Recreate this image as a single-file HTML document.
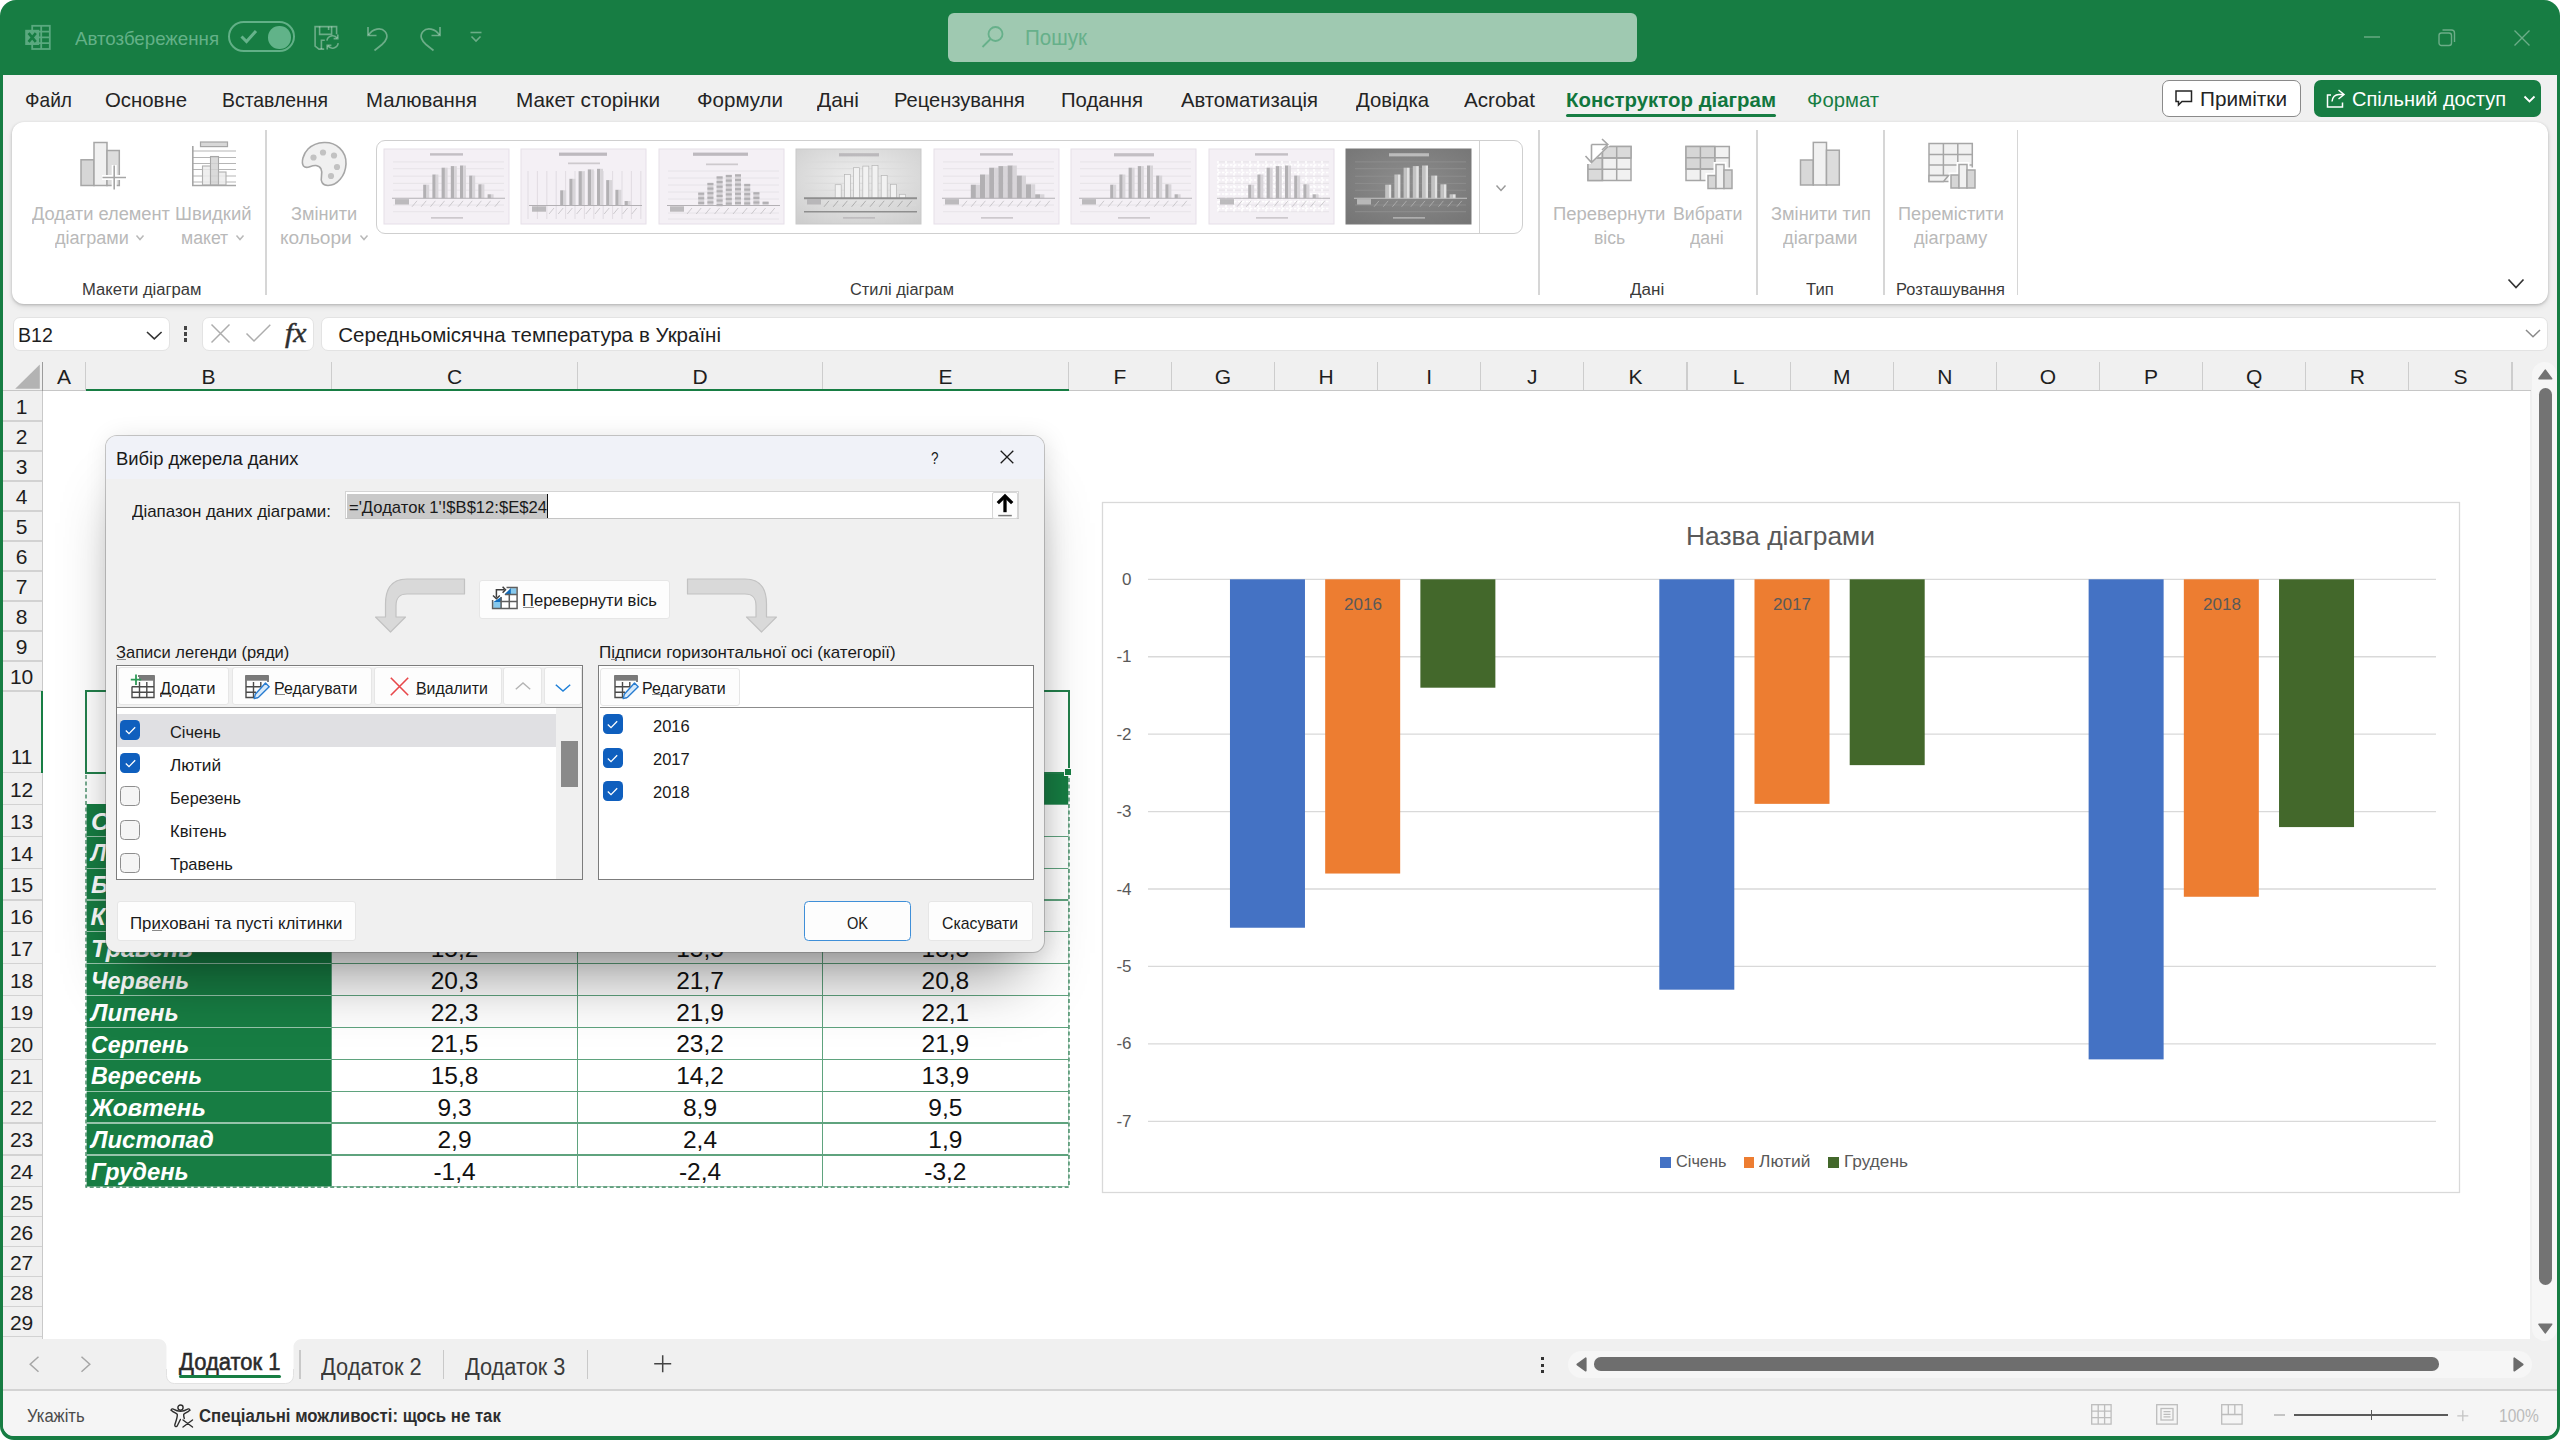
<!DOCTYPE html>
<html lang="uk"><head><meta charset="utf-8"><title>Excel</title>
<style>
html,body{margin:0;padding:0;background:#fff;}
body{width:2560px;height:1440px;overflow:hidden;position:relative;font-family:"Liberation Sans",sans-serif;}
div,span.t,svg{position:absolute;box-sizing:border-box;}
span.t{white-space:nowrap;display:block;}
svg{overflow:visible;}
svg text{font-family:"Liberation Sans",sans-serif;}
</style></head><body>
<div style="left:0px;top:0px;width:2560px;height:1440px;background:#177D43;border-radius:16px 16px 14px 14px;"></div>
<div style="left:3px;top:75px;width:2554px;height:1361px;background:#F0F0F0;border-radius:0 0 11px 11px;"></div>
<svg style="left:24px;top:24px;" width="27" height="27" viewBox="0 0 27 27"><g fill="none" stroke="#5AA97F" stroke-width="1.8">
      <rect x="8.2" y="1.8" width="17.6" height="23.2"/><path d="M8.2 7.6H25.8M8.2 13.4H25.8M8.2 19.2H25.8M17.2 1.8V25"/></g>
      <rect x="1.2" y="5.8" width="14" height="15.2" fill="#5AA97F"/>
      <path d="M4.6 9.2L11.8 17.8M11.8 9.2L4.6 17.8" stroke="#177D43" stroke-width="2.7"/></svg>
<span class="t" style="left:75.00px;top:30.14px;font-size:18.5px;line-height:18.5px;color:#64B188;transform:scaleX(1.0102);transform-origin:0 50%;">Автозбереження</span>
<div style="left:228px;top:21px;width:67px;height:31px;border:2px solid #62B087;border-radius:16px;"></div>
<svg style="left:240px;top:29px;" width="18" height="15" viewBox="0 0 18 15"><path d="M1.5 7.5L6.5 12.5L16 2" fill="none" stroke="#66B38B" stroke-width="3"/></svg>
<div style="left:268px;top:26px;width:22.5px;height:22.5px;background:#61B389;border-radius:50%;"></div>
<svg style="left:314px;top:25px;" width="28" height="27" viewBox="0 0 28 27"><g fill="none" stroke="rgba(255,255,255,0.37)" stroke-width="1.6">
      <path d="M22.6 9.2V1.6H1.1V21.1L5 24.1H10.2"/><path d="M5.6 1.6V9.4H17.6V1.6"/><path d="M14.6 1.8V5M7.4 24V15.2H10.8"/>
      <path d="M12.9 15.6a5.8 5.8 0 0 1 10.4-2.4M24.2 18.2a5.8 5.8 0 0 1-10.4 2.6"/><path d="M23.8 9.4V13.6H19.6M13.2 24.6V20.4H17.4"/></g></svg>
<svg style="left:365px;top:25px;" width="26" height="26" viewBox="0 0 26 26"><g fill="none" stroke="rgba(255,255,255,0.37)" stroke-width="1.7"><path d="M3 2V10.5H11.5"/><path d="M3.5 10C8 3.5 16 2 20 6.5C24 11 21 16 17 19.5L9.5 25.5"/></g></svg>
<svg style="left:417px;top:25px;" width="26" height="26" viewBox="0 0 26 26"><g fill="none" stroke="rgba(255,255,255,0.37)" stroke-width="1.7"><path d="M23 2V10.5H14.5"/><path d="M22.5 10C18 3.5 10 2 6 6.5C2 11 5 16 9 19.5L16.5 25.5"/></g></svg>
<svg style="left:469px;top:31px;" width="14" height="12" viewBox="0 0 14 12"><g fill="none" stroke="rgba(255,255,255,0.37)" stroke-width="1.6"><path d="M1.5 1.5H12.5"/><path d="M2.5 5.5L7 10L11.5 5.5"/></g></svg>
<div style="left:948px;top:13px;width:689px;height:49px;background:#9FC9B1;border-radius:6px;"></div>
<svg style="left:981px;top:25px;" width="24" height="24" viewBox="0 0 24 24"><g fill="none" stroke="#66B08A" stroke-width="1.8"><circle cx="14.5" cy="9" r="7"/><path d="M9.5 14L1.5 22"/></g></svg>
<span class="t" style="left:1025.00px;top:27.18px;font-size:22px;line-height:22px;color:#66B08A;transform:scaleX(0.9348);transform-origin:0 50%;">Пошук</span>
<svg style="left:2364px;top:36px;" width="17" height="2" viewBox="0 0 17 2"><path d="M0 1H16" stroke="rgba(255,255,255,0.37)" stroke-width="1.4"/></svg>
<svg style="left:2438px;top:29px;" width="18" height="18" viewBox="0 0 18 18"><g fill="none" stroke="rgba(255,255,255,0.37)" stroke-width="1.4"><rect x="1" y="4" width="12.5" height="12.5" rx="2.5"/><path d="M4.5 1H13.5a3 3 0 0 1 3 3V13"/></g></svg>
<svg style="left:2513px;top:29px;" width="18" height="18" viewBox="0 0 18 18"><path d="M1.5 1.5L16.5 16.5M16.5 1.5L1.5 16.5" stroke="rgba(255,255,255,0.37)" stroke-width="1.4"/></svg>
<span class="t" style="left:25.00px;top:88.92px;font-size:21px;line-height:21px;color:#242424;transform:scaleX(0.9103);transform-origin:0 50%;">Файл</span>
<span class="t" style="left:105.00px;top:88.92px;font-size:21px;line-height:21px;color:#242424;transform:scaleX(0.9699);transform-origin:0 50%;">Основне</span>
<span class="t" style="left:222.00px;top:88.92px;font-size:21px;line-height:21px;color:#242424;transform:scaleX(0.9238);transform-origin:0 50%;">Вставлення</span>
<span class="t" style="left:366.00px;top:88.92px;font-size:21px;line-height:21px;color:#242424;transform:scaleX(0.9688);transform-origin:0 50%;">Малювання</span>
<span class="t" style="left:516.00px;top:88.92px;font-size:21px;line-height:21px;color:#242424;transform:scaleX(0.9884);transform-origin:0 50%;">Макет сторінки</span>
<span class="t" style="left:697.00px;top:88.92px;font-size:21px;line-height:21px;color:#242424;transform:scaleX(0.9770);transform-origin:0 50%;">Формули</span>
<span class="t" style="left:817.00px;top:88.92px;font-size:21px;line-height:21px;color:#242424;transform:scaleX(0.9961);transform-origin:0 50%;">Дані</span>
<span class="t" style="left:894.00px;top:88.92px;font-size:21px;line-height:21px;color:#242424;transform:scaleX(0.9570);transform-origin:0 50%;">Рецензування</span>
<span class="t" style="left:1061.00px;top:88.92px;font-size:21px;line-height:21px;color:#242424;transform:scaleX(0.9668);transform-origin:0 50%;">Подання</span>
<span class="t" style="left:1181.00px;top:88.92px;font-size:21px;line-height:21px;color:#242424;transform:scaleX(0.9638);transform-origin:0 50%;">Автоматизація</span>
<span class="t" style="left:1356.00px;top:88.92px;font-size:21px;line-height:21px;color:#242424;transform:scaleX(0.9663);transform-origin:0 50%;">Довідка</span>
<span class="t" style="left:1464.00px;top:88.92px;font-size:21px;line-height:21px;color:#242424;transform:scaleX(0.9810);transform-origin:0 50%;">Acrobat</span>
<span class="t" style="left:1566.00px;top:88.92px;font-size:21px;line-height:21px;color:#11763D;transform:scaleX(0.9715);transform-origin:0 50%;font-weight:700;">Конструктор діаграм</span>
<div style="left:1566px;top:114px;width:210px;height:3px;background:#177D43;border-radius:1.5px;"></div>
<span class="t" style="left:1807.00px;top:88.92px;font-size:21px;line-height:21px;color:#177D43;transform:scaleX(0.9652);transform-origin:0 50%;">Формат</span>
<div style="left:2162px;top:80px;width:139px;height:37px;background:#fff;border:1px solid #8A8A8A;border-radius:7px;"></div>
<svg style="left:2175px;top:90px;" width="18" height="17" viewBox="0 0 18 17"><path d="M1 1H16.5V11.5H7L3.5 15V11.5H1Z" fill="none" stroke="#242424" stroke-width="1.5"/></svg>
<span class="t" style="left:2200.00px;top:88.22px;font-size:21px;line-height:21px;color:#242424;transform:scaleX(0.9870);transform-origin:0 50%;">Примітки</span>
<div style="left:2314px;top:80px;width:227px;height:37px;background:#177D43;border-radius:7px;"></div>
<svg style="left:2326px;top:89px;" width="20" height="19" viewBox="0 0 20 19"><g fill="none" stroke="#fff" stroke-width="1.5"><path d="M5 6H1.5V18H16.5V13.5"/><path d="M12.5 1L18 5.5L12.5 10M18 5.5H13C9 5.5 6.5 8.5 6 12.5"/></g></svg>
<span class="t" style="left:2352.00px;top:88.22px;font-size:21px;line-height:21px;color:#fff;transform:scaleX(0.9538);transform-origin:0 50%;">Спільний доступ</span>
<svg style="left:2523px;top:95px;" width="13" height="9" viewBox="0 0 13 9"><path d="M1.5 1.5L6.5 6.5L11.5 1.5" fill="none" stroke="#fff" stroke-width="1.8"/></svg>
<div style="left:12px;top:122px;width:2536px;height:182px;background:#fff;border-radius:12px;box-shadow:0 1px 3px rgba(0,0,0,0.22),0 3px 6px rgba(0,0,0,0.08);"></div>
<div style="left:265px;top:130px;width:1.5px;height:165px;background:#D6D6D6;"></div>
<div style="left:1538px;top:130px;width:1.5px;height:165px;background:#D6D6D6;"></div>
<div style="left:1756px;top:130px;width:1.5px;height:165px;background:#D6D6D6;"></div>
<div style="left:1883px;top:130px;width:1.5px;height:165px;background:#D6D6D6;"></div>
<div style="left:2016.5px;top:130px;width:1.5px;height:165px;background:#D6D6D6;"></div>
<svg style="left:78px;top:139px;" width="52" height="54" viewBox="0 0 52 54"><g stroke="#A6A6A6" stroke-width="1.5">
      <rect x="3" y="20.8" width="13" height="25.7" fill="#D6D6D6"/>
      <rect x="16" y="3.5" width="13" height="43" fill="#F0F0F0"/>
      <rect x="29" y="11.5" width="12.3" height="35" fill="#DDDDDD"/></g>
      <path d="M24 38.5H48M36.2 26V50.5" stroke="#fff" stroke-width="5"/>
      <path d="M24.5 38.5H48M36.2 26.5V50.5" stroke="#A6A6A6" stroke-width="1.6"/></svg>
<span class="t" style="left:32.00px;top:204.56px;font-size:18px;line-height:18px;color:#B9B9B9;transform:scaleX(1.0152);transform-origin:0 50%;">Додати елемент</span>
<span class="t" style="left:54.50px;top:229.26px;font-size:18px;line-height:18px;color:#B9B9B9;transform:scaleX(1.0036);transform-origin:0 50%;">діаграми</span>
<svg style="left:136px;top:234.5px;" width="8" height="5" viewBox="0 0 8 5"><path d="M0.5 0.5L4.0 4.5L7.5 0.5" fill="none" stroke="#B9B9B9" stroke-width="1.5"/></svg>
<svg style="left:191px;top:139px;" width="48" height="50" viewBox="0 0 48 50"><rect x="9.5" y="3" width="27" height="4.6" fill="#D8D8D8" stroke="#A6A6A6" stroke-width="1.2"/>
      <path d="M1.5 12H45" stroke="#B5B5B5" stroke-width="1.1"/><path d="M1.5 18.5H45" stroke="#B5B5B5" stroke-width="1.1"/><path d="M1.5 24.5H45" stroke="#B5B5B5" stroke-width="1.1"/><path d="M1.5 30.5H45" stroke="#B5B5B5" stroke-width="1.1"/><path d="M1.5 37H45" stroke="#B5B5B5" stroke-width="1.1"/><path d="M1.5 43H45" stroke="#B5B5B5" stroke-width="1.1"/>
      <rect x="11.5" y="27" width="8" height="19" fill="#ECECEC" stroke="#B0B0B0" stroke-width="1.1" fill-opacity="0.85"/>
      <rect x="19.5" y="17.5" width="8" height="28.5" fill="#D4D4D4" stroke="#A8A8A8" stroke-width="1.1" fill-opacity="0.85"/>
      <rect x="27.5" y="33" width="7.5" height="13" fill="#ECECEC" stroke="#B0B0B0" stroke-width="1.1" fill-opacity="0.85"/>
      <path d="M1.8 7V46.5H45" fill="none" stroke="#A6A6A6" stroke-width="1.6"/></svg>
<span class="t" style="left:175.40px;top:204.56px;font-size:18px;line-height:18px;color:#B9B9B9;transform:scaleX(1.0268);transform-origin:0 50%;">Швидкий</span>
<span class="t" style="left:181.00px;top:229.26px;font-size:18px;line-height:18px;color:#B9B9B9;transform:scaleX(0.9808);transform-origin:0 50%;">макет</span>
<svg style="left:235.8px;top:234.5px;" width="8" height="5" viewBox="0 0 8 5"><path d="M0.5 0.5L4.0 4.5L7.5 0.5" fill="none" stroke="#B9B9B9" stroke-width="1.5"/></svg>
<svg style="left:300px;top:139px;" width="50" height="50" viewBox="0 0 50 50"><path d="M24 3.5C36 3 46.5 12 46 25C45.5 37 37 46.5 28 46.5C22 46.5 20.5 42 21.5 37C22.5 31.5 21 27 16 26.5C10 26 7 31 3.5 27C1 23.5 3 15 8 10C12 6 17.5 3.8 24 3.5Z" fill="#F0F0F0" stroke="#A6A6A6" stroke-width="1.6"/>
      <g fill="#C2C2C2"><circle cx="13.5" cy="18.5" r="3.1"/><circle cx="23" cy="13.5" r="3.1"/><circle cx="34" cy="16.5" r="3.1"/><circle cx="37" cy="28" r="3.1"/><circle cx="31" cy="37" r="3.1"/></g></svg>
<span class="t" style="left:291.40px;top:204.56px;font-size:18px;line-height:18px;color:#B9B9B9;transform:scaleX(1.0100);transform-origin:0 50%;">Змінити</span>
<span class="t" style="left:280.20px;top:229.26px;font-size:18px;line-height:18px;color:#B9B9B9;transform:scaleX(1.0612);transform-origin:0 50%;">кольори</span>
<svg style="left:359.6px;top:234.5px;" width="8" height="5" viewBox="0 0 8 5"><path d="M0.5 0.5L4.0 4.5L7.5 0.5" fill="none" stroke="#B9B9B9" stroke-width="1.5"/></svg>
<div style="left:375.5px;top:140px;width:1147px;height:94px;background:#fff;border:1.3px solid #CFCFCF;border-radius:9px;"></div>
<div style="left:1479px;top:141px;width:1.3px;height:92px;background:#D2D2D2;"></div>
<svg style="left:384px;top:149px;" width="125" height="75" viewBox="0 0 125 75"><rect x="0" y="0" width="125" height="75" fill="#F4F0F5" stroke="#E6DFE8" stroke-width="1"/><path d="M9 12.9H120" stroke="#E3DFE4" stroke-width="0.8"/><path d="M9 19.7H120" stroke="#E3DFE4" stroke-width="0.8"/><path d="M9 27.2H120" stroke="#E3DFE4" stroke-width="0.8"/><path d="M9 34.4H120" stroke="#E3DFE4" stroke-width="0.8"/><path d="M9 41.2H120" stroke="#E3DFE4" stroke-width="0.8"/><path d="M9 56H120" stroke="#E3DFE4" stroke-width="0.8"/><path d="M9 62.7H120" stroke="#E3DFE4" stroke-width="0.8"/><rect x="46" y="4.2" width="33" height="2.4" fill="#A5A1A6" opacity="0.62"/><rect x="47" y="68" width="32" height="1.7" fill="#A5A1A6" opacity="0.5"/><rect x="39.2" y="35.7" width="3.3" height="13.6" fill="#B2B0B3"/><rect x="42.5" y="35.7" width="2.7" height="13.6" fill="#D8D5D9"/><rect x="48.4" y="25.5" width="3.3" height="23.8" fill="#B2B0B3"/><rect x="51.7" y="25.5" width="2.7" height="23.8" fill="#D8D5D9"/><rect x="57.6" y="18.7" width="3.3" height="30.6" fill="#B2B0B3"/><rect x="60.9" y="18.7" width="2.7" height="30.6" fill="#D8D5D9"/><rect x="66.8" y="17.1" width="3.3" height="32.2" fill="#B2B0B3"/><rect x="70.1" y="17.1" width="2.7" height="32.2" fill="#D8D5D9"/><rect x="76.0" y="16.5" width="3.3" height="32.8" fill="#B2B0B3"/><rect x="79.3" y="16.5" width="2.7" height="32.8" fill="#D8D5D9"/><rect x="85.2" y="26.6" width="3.3" height="22.7" fill="#B2B0B3"/><rect x="88.5" y="26.6" width="2.7" height="22.7" fill="#D8D5D9"/><rect x="94.4" y="35.3" width="3.3" height="14.0" fill="#B2B0B3"/><rect x="97.7" y="35.3" width="2.7" height="14.0" fill="#D8D5D9"/><rect x="103.6" y="45.3" width="3.3" height="4.0" fill="#B2B0B3"/><rect x="106.9" y="45.3" width="2.7" height="4.0" fill="#D8D5D9"/><path d="M8 49.3H121" stroke="#B3B0B4" stroke-width="1.1"/><rect x="11" y="50.099999999999994" width="14" height="5.4" fill="#B2B0B3" opacity="0.85"/><path d="M28.0 57.8L33.0 51.8" stroke="#B3B0B4" stroke-width="0.8" opacity="0.75"/><path d="M37.2 57.8L42.2 51.8" stroke="#B3B0B4" stroke-width="0.8" opacity="0.75"/><path d="M46.4 57.8L51.4 51.8" stroke="#B3B0B4" stroke-width="0.8" opacity="0.75"/><path d="M55.6 57.8L60.6 51.8" stroke="#B3B0B4" stroke-width="0.8" opacity="0.75"/><path d="M64.8 57.8L69.8 51.8" stroke="#B3B0B4" stroke-width="0.8" opacity="0.75"/><path d="M74.0 57.8L79.0 51.8" stroke="#B3B0B4" stroke-width="0.8" opacity="0.75"/><path d="M83.2 57.8L88.2 51.8" stroke="#B3B0B4" stroke-width="0.8" opacity="0.75"/><path d="M92.4 57.8L97.4 51.8" stroke="#B3B0B4" stroke-width="0.8" opacity="0.75"/><path d="M101.6 57.8L106.6 51.8" stroke="#B3B0B4" stroke-width="0.8" opacity="0.75"/><path d="M110.8 57.8L115.8 51.8" stroke="#B3B0B4" stroke-width="0.8" opacity="0.75"/></svg>
<svg style="left:521.4px;top:149px;" width="125" height="75" viewBox="0 0 125 75"><rect x="0" y="0" width="125" height="75" fill="#F4F0F5" stroke="#E6DFE8" stroke-width="1"/><path d="M7.0 22V70" stroke="#DCD7DD" stroke-width="0.8"/><path d="M16.4 22V70" stroke="#DCD7DD" stroke-width="0.8"/><path d="M25.8 22V70" stroke="#DCD7DD" stroke-width="0.8"/><path d="M35.2 22V70" stroke="#DCD7DD" stroke-width="0.8"/><path d="M44.6 22V70" stroke="#DCD7DD" stroke-width="0.8"/><path d="M54.0 22V70" stroke="#DCD7DD" stroke-width="0.8"/><path d="M63.4 22V70" stroke="#DCD7DD" stroke-width="0.8"/><path d="M72.8 22V70" stroke="#DCD7DD" stroke-width="0.8"/><path d="M82.2 22V70" stroke="#DCD7DD" stroke-width="0.8"/><path d="M91.6 22V70" stroke="#DCD7DD" stroke-width="0.8"/><path d="M101.0 22V70" stroke="#DCD7DD" stroke-width="0.8"/><path d="M110.4 22V70" stroke="#DCD7DD" stroke-width="0.8"/><path d="M119.8 22V70" stroke="#DCD7DD" stroke-width="0.8"/><rect x="38" y="3.6" width="48" height="3.2" fill="#A5A1A6" opacity="0.7"/><rect x="47" y="13.5" width="32" height="1.7" fill="#A5A1A6" opacity="0.5"/><rect x="39.2" y="41.3" width="3.3" height="15.2" fill="#B2B0B3"/><rect x="42.5" y="41.3" width="2.7" height="15.2" fill="#D8D5D9"/><rect x="48.4" y="29.8" width="3.3" height="26.7" fill="#B2B0B3"/><rect x="51.7" y="29.8" width="2.7" height="26.7" fill="#D8D5D9"/><rect x="57.6" y="22.2" width="3.3" height="34.3" fill="#B2B0B3"/><rect x="60.9" y="22.2" width="2.7" height="34.3" fill="#D8D5D9"/><rect x="66.8" y="20.4" width="3.3" height="36.1" fill="#B2B0B3"/><rect x="70.1" y="20.4" width="2.7" height="36.1" fill="#D8D5D9"/><rect x="76.0" y="19.8" width="3.3" height="36.7" fill="#B2B0B3"/><rect x="79.3" y="19.8" width="2.7" height="36.7" fill="#D8D5D9"/><rect x="85.2" y="31.1" width="3.3" height="25.4" fill="#B2B0B3"/><rect x="88.5" y="31.1" width="2.7" height="25.4" fill="#D8D5D9"/><rect x="94.4" y="40.8" width="3.3" height="15.7" fill="#B2B0B3"/><rect x="97.7" y="40.8" width="2.7" height="15.7" fill="#D8D5D9"/><rect x="103.6" y="52.0" width="3.3" height="4.5" fill="#B2B0B3"/><rect x="106.9" y="52.0" width="2.7" height="4.5" fill="#D8D5D9"/><path d="M8 56.5H121" stroke="#B3B0B4" stroke-width="1.1"/><rect x="11" y="57.3" width="14" height="5.4" fill="#B2B0B3" opacity="0.85"/><path d="M28.0 65.0L33.0 59.0" stroke="#B3B0B4" stroke-width="0.8" opacity="0.75"/><path d="M37.2 65.0L42.2 59.0" stroke="#B3B0B4" stroke-width="0.8" opacity="0.75"/><path d="M46.4 65.0L51.4 59.0" stroke="#B3B0B4" stroke-width="0.8" opacity="0.75"/><path d="M55.6 65.0L60.6 59.0" stroke="#B3B0B4" stroke-width="0.8" opacity="0.75"/><path d="M64.8 65.0L69.8 59.0" stroke="#B3B0B4" stroke-width="0.8" opacity="0.75"/><path d="M74.0 65.0L79.0 59.0" stroke="#B3B0B4" stroke-width="0.8" opacity="0.75"/><path d="M83.2 65.0L88.2 59.0" stroke="#B3B0B4" stroke-width="0.8" opacity="0.75"/><path d="M92.4 65.0L97.4 59.0" stroke="#B3B0B4" stroke-width="0.8" opacity="0.75"/><path d="M101.6 65.0L106.6 59.0" stroke="#B3B0B4" stroke-width="0.8" opacity="0.75"/><path d="M110.8 65.0L115.8 59.0" stroke="#B3B0B4" stroke-width="0.8" opacity="0.75"/></svg>
<svg style="left:658.9px;top:149px;" width="125" height="75" viewBox="0 0 125 75"><rect x="0" y="0" width="125" height="75" fill="#F4F0F5" stroke="#E6DFE8" stroke-width="1"/><path d="M9 22H120" stroke="#E3DFE4" stroke-width="0.8"/><path d="M9 29H120" stroke="#E3DFE4" stroke-width="0.8"/><path d="M9 36H120" stroke="#E3DFE4" stroke-width="0.8"/><path d="M9 43H120" stroke="#E3DFE4" stroke-width="0.8"/><path d="M9 50H120" stroke="#E3DFE4" stroke-width="0.8"/><path d="M9 64H120" stroke="#E3DFE4" stroke-width="0.8"/><path d="M9 70H120" stroke="#E3DFE4" stroke-width="0.8"/><rect x="34" y="3.6" width="55" height="3.2" fill="#A5A1A6" opacity="0.7"/><rect x="47" y="14.5" width="32" height="1.7" fill="#A5A1A6" opacity="0.5"/><rect x="39.2" y="43.6" width="6.0" height="12.9" fill="#D8D5D9"/><rect x="39.2" y="43.6" width="6.0" height="2.2" fill="#B2B0B3"/><rect x="39.2" y="48.2" width="6.0" height="2.2" fill="#B2B0B3"/><rect x="39.2" y="52.8" width="6.0" height="2.2" fill="#B2B0B3"/><rect x="48.4" y="33.9" width="6.0" height="22.6" fill="#D8D5D9"/><rect x="48.4" y="33.9" width="6.0" height="2.2" fill="#B2B0B3"/><rect x="48.4" y="38.5" width="6.0" height="2.2" fill="#B2B0B3"/><rect x="48.4" y="43.1" width="6.0" height="2.2" fill="#B2B0B3"/><rect x="48.4" y="47.7" width="6.0" height="2.2" fill="#B2B0B3"/><rect x="48.4" y="52.3" width="6.0" height="2.2" fill="#B2B0B3"/><rect x="57.6" y="27.4" width="6.0" height="29.1" fill="#D8D5D9"/><rect x="57.6" y="27.4" width="6.0" height="2.2" fill="#B2B0B3"/><rect x="57.6" y="32.0" width="6.0" height="2.2" fill="#B2B0B3"/><rect x="57.6" y="36.6" width="6.0" height="2.2" fill="#B2B0B3"/><rect x="57.6" y="41.2" width="6.0" height="2.2" fill="#B2B0B3"/><rect x="57.6" y="45.8" width="6.0" height="2.2" fill="#B2B0B3"/><rect x="57.6" y="50.4" width="6.0" height="2.2" fill="#B2B0B3"/><rect x="57.6" y="55.0" width="6.0" height="2.2" fill="#B2B0B3"/><rect x="66.8" y="25.9" width="6.0" height="30.6" fill="#D8D5D9"/><rect x="66.8" y="25.9" width="6.0" height="2.2" fill="#B2B0B3"/><rect x="66.8" y="30.5" width="6.0" height="2.2" fill="#B2B0B3"/><rect x="66.8" y="35.1" width="6.0" height="2.2" fill="#B2B0B3"/><rect x="66.8" y="39.7" width="6.0" height="2.2" fill="#B2B0B3"/><rect x="66.8" y="44.3" width="6.0" height="2.2" fill="#B2B0B3"/><rect x="66.8" y="48.9" width="6.0" height="2.2" fill="#B2B0B3"/><rect x="66.8" y="53.5" width="6.0" height="2.2" fill="#B2B0B3"/><rect x="76.0" y="25.3" width="6.0" height="31.2" fill="#D8D5D9"/><rect x="76.0" y="25.3" width="6.0" height="2.2" fill="#B2B0B3"/><rect x="76.0" y="29.9" width="6.0" height="2.2" fill="#B2B0B3"/><rect x="76.0" y="34.5" width="6.0" height="2.2" fill="#B2B0B3"/><rect x="76.0" y="39.1" width="6.0" height="2.2" fill="#B2B0B3"/><rect x="76.0" y="43.7" width="6.0" height="2.2" fill="#B2B0B3"/><rect x="76.0" y="48.3" width="6.0" height="2.2" fill="#B2B0B3"/><rect x="76.0" y="52.9" width="6.0" height="2.2" fill="#B2B0B3"/><rect x="85.2" y="34.9" width="6.0" height="21.6" fill="#D8D5D9"/><rect x="85.2" y="34.9" width="6.0" height="2.2" fill="#B2B0B3"/><rect x="85.2" y="39.5" width="6.0" height="2.2" fill="#B2B0B3"/><rect x="85.2" y="44.1" width="6.0" height="2.2" fill="#B2B0B3"/><rect x="85.2" y="48.7" width="6.0" height="2.2" fill="#B2B0B3"/><rect x="85.2" y="53.3" width="6.0" height="2.2" fill="#B2B0B3"/><rect x="94.4" y="43.2" width="6.0" height="13.3" fill="#D8D5D9"/><rect x="94.4" y="43.2" width="6.0" height="2.2" fill="#B2B0B3"/><rect x="94.4" y="47.8" width="6.0" height="2.2" fill="#B2B0B3"/><rect x="94.4" y="52.4" width="6.0" height="2.2" fill="#B2B0B3"/><rect x="103.6" y="52.7" width="6.0" height="3.8" fill="#D8D5D9"/><rect x="103.6" y="52.7" width="6.0" height="2.2" fill="#B2B0B3"/><path d="M8 56.5H121" stroke="#B3B0B4" stroke-width="1.1"/><rect x="11" y="57.3" width="14" height="5.4" fill="#B2B0B3" opacity="0.85"/><path d="M28.0 65.0L33.0 59.0" stroke="#B3B0B4" stroke-width="0.8" opacity="0.75"/><path d="M37.2 65.0L42.2 59.0" stroke="#B3B0B4" stroke-width="0.8" opacity="0.75"/><path d="M46.4 65.0L51.4 59.0" stroke="#B3B0B4" stroke-width="0.8" opacity="0.75"/><path d="M55.6 65.0L60.6 59.0" stroke="#B3B0B4" stroke-width="0.8" opacity="0.75"/><path d="M64.8 65.0L69.8 59.0" stroke="#B3B0B4" stroke-width="0.8" opacity="0.75"/><path d="M74.0 65.0L79.0 59.0" stroke="#B3B0B4" stroke-width="0.8" opacity="0.75"/><path d="M83.2 65.0L88.2 59.0" stroke="#B3B0B4" stroke-width="0.8" opacity="0.75"/><path d="M92.4 65.0L97.4 59.0" stroke="#B3B0B4" stroke-width="0.8" opacity="0.75"/><path d="M101.6 65.0L106.6 59.0" stroke="#B3B0B4" stroke-width="0.8" opacity="0.75"/><path d="M110.8 65.0L115.8 59.0" stroke="#B3B0B4" stroke-width="0.8" opacity="0.75"/></svg>
<svg style="left:796.2px;top:149px;" width="125" height="75" viewBox="0 0 125 75"><defs><radialGradient id="gm" cx="50%" cy="40%" r="75%"><stop offset="0" stop-color="#EFEFEF"/><stop offset="1" stop-color="#CDCDCD"/></radialGradient></defs><rect x="0" y="0" width="125" height="75" fill="url(#gm)" stroke="#C9C9C9" stroke-width="1"/><path d="M9 12.9H120" stroke="#D9D9D9" stroke-width="0.8"/><path d="M9 19.7H120" stroke="#D9D9D9" stroke-width="0.8"/><path d="M9 27.2H120" stroke="#D9D9D9" stroke-width="0.8"/><path d="M9 34.4H120" stroke="#D9D9D9" stroke-width="0.8"/><path d="M9 41.2H120" stroke="#D9D9D9" stroke-width="0.8"/><path d="M9 56H120" stroke="#D9D9D9" stroke-width="0.8"/><path d="M9 62.7H120" stroke="#D9D9D9" stroke-width="0.8"/><rect x="43" y="4.2" width="40" height="3.2" fill="#A5A1A6" opacity="0.62"/><rect x="47" y="68" width="32" height="1.7" fill="#A5A1A6" opacity="0.5"/><rect x="39.2" y="35.7" width="6.0" height="13.6" fill="#F2F2F2" stroke="#B5B5B5" stroke-width="0.7"/><rect x="48.4" y="25.5" width="6.0" height="23.8" fill="#F2F2F2" stroke="#B5B5B5" stroke-width="0.7"/><rect x="57.6" y="18.7" width="6.0" height="30.6" fill="#F2F2F2" stroke="#B5B5B5" stroke-width="0.7"/><rect x="66.8" y="17.1" width="6.0" height="32.2" fill="#F2F2F2" stroke="#B5B5B5" stroke-width="0.7"/><rect x="76.0" y="16.5" width="6.0" height="32.8" fill="#F2F2F2" stroke="#B5B5B5" stroke-width="0.7"/><rect x="85.2" y="26.6" width="6.0" height="22.7" fill="#F2F2F2" stroke="#B5B5B5" stroke-width="0.7"/><rect x="94.4" y="35.3" width="6.0" height="14.0" fill="#F2F2F2" stroke="#B5B5B5" stroke-width="0.7"/><rect x="103.6" y="45.3" width="6.0" height="4.0" fill="#F2F2F2" stroke="#B5B5B5" stroke-width="0.7"/><path d="M8 49.3H121" stroke="#8E8E8E" stroke-width="2"/><path d="M8 62.7H121" stroke="#8E8E8E" stroke-width="1.6"/><rect x="11" y="50.099999999999994" width="14" height="5.4" fill="#B2B0B3" opacity="0.85"/><path d="M28.0 57.8L33.0 51.8" stroke="#8E8E8E" stroke-width="0.8" opacity="0.75"/><path d="M37.2 57.8L42.2 51.8" stroke="#8E8E8E" stroke-width="0.8" opacity="0.75"/><path d="M46.4 57.8L51.4 51.8" stroke="#8E8E8E" stroke-width="0.8" opacity="0.75"/><path d="M55.6 57.8L60.6 51.8" stroke="#8E8E8E" stroke-width="0.8" opacity="0.75"/><path d="M64.8 57.8L69.8 51.8" stroke="#8E8E8E" stroke-width="0.8" opacity="0.75"/><path d="M74.0 57.8L79.0 51.8" stroke="#8E8E8E" stroke-width="0.8" opacity="0.75"/><path d="M83.2 57.8L88.2 51.8" stroke="#8E8E8E" stroke-width="0.8" opacity="0.75"/><path d="M92.4 57.8L97.4 51.8" stroke="#8E8E8E" stroke-width="0.8" opacity="0.75"/><path d="M101.6 57.8L106.6 51.8" stroke="#8E8E8E" stroke-width="0.8" opacity="0.75"/><path d="M110.8 57.8L115.8 51.8" stroke="#8E8E8E" stroke-width="0.8" opacity="0.75"/></svg>
<svg style="left:934px;top:149px;" width="125" height="75" viewBox="0 0 125 75"><rect x="0" y="0" width="125" height="75" fill="#F4F0F5" stroke="#E6DFE8" stroke-width="1"/><path d="M9 12.9H120" stroke="#E3DFE4" stroke-width="0.8"/><path d="M9 19.7H120" stroke="#E3DFE4" stroke-width="0.8"/><path d="M9 27.2H120" stroke="#E3DFE4" stroke-width="0.8"/><path d="M9 34.4H120" stroke="#E3DFE4" stroke-width="0.8"/><path d="M9 41.2H120" stroke="#E3DFE4" stroke-width="0.8"/><path d="M9 56H120" stroke="#E3DFE4" stroke-width="0.8"/><path d="M9 62.7H120" stroke="#E3DFE4" stroke-width="0.8"/><rect x="46" y="4.2" width="33" height="2.4" fill="#A5A1A6" opacity="0.62"/><rect x="47" y="68" width="32" height="1.7" fill="#A5A1A6" opacity="0.5"/><rect x="36.8" y="35.7" width="5.1" height="13.6" fill="#B2B0B3"/><rect x="41.9" y="35.7" width="4.1" height="13.6" fill="#D8D5D9"/><rect x="46.0" y="25.5" width="5.1" height="23.8" fill="#B2B0B3"/><rect x="51.1" y="25.5" width="4.1" height="23.8" fill="#D8D5D9"/><rect x="55.2" y="18.7" width="5.1" height="30.6" fill="#B2B0B3"/><rect x="60.3" y="18.7" width="4.1" height="30.6" fill="#D8D5D9"/><rect x="64.4" y="17.1" width="5.1" height="32.2" fill="#B2B0B3"/><rect x="69.5" y="17.1" width="4.1" height="32.2" fill="#D8D5D9"/><rect x="73.6" y="16.5" width="5.1" height="32.8" fill="#B2B0B3"/><rect x="78.7" y="16.5" width="4.1" height="32.8" fill="#D8D5D9"/><rect x="82.8" y="26.6" width="5.1" height="22.7" fill="#B2B0B3"/><rect x="87.9" y="26.6" width="4.1" height="22.7" fill="#D8D5D9"/><rect x="92.0" y="35.3" width="5.1" height="14.0" fill="#B2B0B3"/><rect x="97.1" y="35.3" width="4.1" height="14.0" fill="#D8D5D9"/><rect x="101.2" y="45.3" width="5.1" height="4.0" fill="#B2B0B3"/><rect x="106.3" y="45.3" width="4.1" height="4.0" fill="#D8D5D9"/><path d="M8 49.3H121" stroke="#B3B0B4" stroke-width="1.1"/><rect x="11" y="50.099999999999994" width="14" height="5.4" fill="#B2B0B3" opacity="0.85"/><path d="M28.0 57.8L33.0 51.8" stroke="#B3B0B4" stroke-width="0.8" opacity="0.75"/><path d="M37.2 57.8L42.2 51.8" stroke="#B3B0B4" stroke-width="0.8" opacity="0.75"/><path d="M46.4 57.8L51.4 51.8" stroke="#B3B0B4" stroke-width="0.8" opacity="0.75"/><path d="M55.6 57.8L60.6 51.8" stroke="#B3B0B4" stroke-width="0.8" opacity="0.75"/><path d="M64.8 57.8L69.8 51.8" stroke="#B3B0B4" stroke-width="0.8" opacity="0.75"/><path d="M74.0 57.8L79.0 51.8" stroke="#B3B0B4" stroke-width="0.8" opacity="0.75"/><path d="M83.2 57.8L88.2 51.8" stroke="#B3B0B4" stroke-width="0.8" opacity="0.75"/><path d="M92.4 57.8L97.4 51.8" stroke="#B3B0B4" stroke-width="0.8" opacity="0.75"/><path d="M101.6 57.8L106.6 51.8" stroke="#B3B0B4" stroke-width="0.8" opacity="0.75"/><path d="M110.8 57.8L115.8 51.8" stroke="#B3B0B4" stroke-width="0.8" opacity="0.75"/></svg>
<svg style="left:1071.4px;top:149px;" width="125" height="75" viewBox="0 0 125 75"><rect x="0" y="0" width="125" height="75" fill="#F4F0F5" stroke="#E6DFE8" stroke-width="1"/><path d="M9 12.9H120" stroke="#E3DFE4" stroke-width="0.8"/><path d="M9 19.7H120" stroke="#E3DFE4" stroke-width="0.8"/><path d="M9 27.2H120" stroke="#E3DFE4" stroke-width="0.8"/><path d="M9 34.4H120" stroke="#E3DFE4" stroke-width="0.8"/><path d="M9 41.2H120" stroke="#E3DFE4" stroke-width="0.8"/><path d="M9 56H120" stroke="#E3DFE4" stroke-width="0.8"/><path d="M9 62.7H120" stroke="#E3DFE4" stroke-width="0.8"/><rect x="43" y="4.2" width="40" height="3.2" fill="#A5A1A6" opacity="0.62"/><rect x="47" y="68" width="32" height="1.7" fill="#A5A1A6" opacity="0.5"/><rect x="39.2" y="35.7" width="3.3" height="13.6" fill="#B2B0B3"/><rect x="42.5" y="35.7" width="2.7" height="13.6" fill="#D8D5D9"/><rect x="48.4" y="25.5" width="3.3" height="23.8" fill="#B2B0B3"/><rect x="51.7" y="25.5" width="2.7" height="23.8" fill="#D8D5D9"/><rect x="57.6" y="18.7" width="3.3" height="30.6" fill="#B2B0B3"/><rect x="60.9" y="18.7" width="2.7" height="30.6" fill="#D8D5D9"/><rect x="66.8" y="17.1" width="3.3" height="32.2" fill="#B2B0B3"/><rect x="70.1" y="17.1" width="2.7" height="32.2" fill="#D8D5D9"/><rect x="76.0" y="16.5" width="3.3" height="32.8" fill="#B2B0B3"/><rect x="79.3" y="16.5" width="2.7" height="32.8" fill="#D8D5D9"/><rect x="85.2" y="26.6" width="3.3" height="22.7" fill="#B2B0B3"/><rect x="88.5" y="26.6" width="2.7" height="22.7" fill="#D8D5D9"/><rect x="94.4" y="35.3" width="3.3" height="14.0" fill="#B2B0B3"/><rect x="97.7" y="35.3" width="2.7" height="14.0" fill="#D8D5D9"/><rect x="103.6" y="45.3" width="3.3" height="4.0" fill="#B2B0B3"/><rect x="106.9" y="45.3" width="2.7" height="4.0" fill="#D8D5D9"/><path d="M8 49.3H121" stroke="#B3B0B4" stroke-width="1.1"/><rect x="11" y="50.099999999999994" width="14" height="5.4" fill="#B2B0B3" opacity="0.85"/><path d="M28.0 57.8L33.0 51.8" stroke="#B3B0B4" stroke-width="0.8" opacity="0.75"/><path d="M37.2 57.8L42.2 51.8" stroke="#B3B0B4" stroke-width="0.8" opacity="0.75"/><path d="M46.4 57.8L51.4 51.8" stroke="#B3B0B4" stroke-width="0.8" opacity="0.75"/><path d="M55.6 57.8L60.6 51.8" stroke="#B3B0B4" stroke-width="0.8" opacity="0.75"/><path d="M64.8 57.8L69.8 51.8" stroke="#B3B0B4" stroke-width="0.8" opacity="0.75"/><path d="M74.0 57.8L79.0 51.8" stroke="#B3B0B4" stroke-width="0.8" opacity="0.75"/><path d="M83.2 57.8L88.2 51.8" stroke="#B3B0B4" stroke-width="0.8" opacity="0.75"/><path d="M92.4 57.8L97.4 51.8" stroke="#B3B0B4" stroke-width="0.8" opacity="0.75"/><path d="M101.6 57.8L106.6 51.8" stroke="#B3B0B4" stroke-width="0.8" opacity="0.75"/><path d="M110.8 57.8L115.8 51.8" stroke="#B3B0B4" stroke-width="0.8" opacity="0.75"/></svg>
<svg style="left:1209px;top:149px;" width="125" height="75" viewBox="0 0 125 75"><rect x="0" y="0" width="125" height="75" fill="#F4F0F5" stroke="#E6DFE8" stroke-width="1"/><path d="M9 12.9H120" stroke="#E3DFE4" stroke-width="0.8"/><path d="M9 19.7H120" stroke="#E3DFE4" stroke-width="0.8"/><path d="M9 27.2H120" stroke="#E3DFE4" stroke-width="0.8"/><path d="M9 34.4H120" stroke="#E3DFE4" stroke-width="0.8"/><path d="M9 41.2H120" stroke="#E3DFE4" stroke-width="0.8"/><path d="M9 56H120" stroke="#E3DFE4" stroke-width="0.8"/><path d="M9 62.7H120" stroke="#E3DFE4" stroke-width="0.8"/><path d="M9 12V64" stroke="#FFFFFF" stroke-width="1.5" stroke-dasharray="2.4 1.6"/><path d="M17 12V64" stroke="#FFFFFF" stroke-width="1.5" stroke-dasharray="2.4 1.6"/><path d="M25 12V64" stroke="#FFFFFF" stroke-width="1.5" stroke-dasharray="2.4 1.6"/><path d="M33 12V64" stroke="#FFFFFF" stroke-width="1.5" stroke-dasharray="2.4 1.6"/><path d="M41 12V64" stroke="#FFFFFF" stroke-width="1.5" stroke-dasharray="2.4 1.6"/><path d="M49 12V64" stroke="#FFFFFF" stroke-width="1.5" stroke-dasharray="2.4 1.6"/><path d="M57 12V64" stroke="#FFFFFF" stroke-width="1.5" stroke-dasharray="2.4 1.6"/><path d="M65 12V64" stroke="#FFFFFF" stroke-width="1.5" stroke-dasharray="2.4 1.6"/><path d="M73 12V64" stroke="#FFFFFF" stroke-width="1.5" stroke-dasharray="2.4 1.6"/><path d="M81 12V64" stroke="#FFFFFF" stroke-width="1.5" stroke-dasharray="2.4 1.6"/><path d="M89 12V64" stroke="#FFFFFF" stroke-width="1.5" stroke-dasharray="2.4 1.6"/><path d="M97 12V64" stroke="#FFFFFF" stroke-width="1.5" stroke-dasharray="2.4 1.6"/><path d="M105 12V64" stroke="#FFFFFF" stroke-width="1.5" stroke-dasharray="2.4 1.6"/><path d="M113 12V64" stroke="#FFFFFF" stroke-width="1.5" stroke-dasharray="2.4 1.6"/><path d="M9 16H120" stroke="#FFFFFF" stroke-width="1.5" stroke-dasharray="2.4 1.6"/><path d="M9 23.5H120" stroke="#FFFFFF" stroke-width="1.5" stroke-dasharray="2.4 1.6"/><path d="M9 31H120" stroke="#FFFFFF" stroke-width="1.5" stroke-dasharray="2.4 1.6"/><path d="M9 38H120" stroke="#FFFFFF" stroke-width="1.5" stroke-dasharray="2.4 1.6"/><path d="M9 45H120" stroke="#FFFFFF" stroke-width="1.5" stroke-dasharray="2.4 1.6"/><path d="M9 52.5H120" stroke="#FFFFFF" stroke-width="1.5" stroke-dasharray="2.4 1.6"/><path d="M9 59.5H120" stroke="#FFFFFF" stroke-width="1.5" stroke-dasharray="2.4 1.6"/><rect x="46" y="4.2" width="33" height="2.4" fill="#A5A1A6" opacity="0.62"/><rect x="47" y="68" width="32" height="1.7" fill="#A5A1A6" opacity="0.5"/><rect x="39.2" y="35.7" width="3.3" height="13.6" fill="#B2B0B3"/><rect x="42.5" y="35.7" width="2.7" height="13.6" fill="#D8D5D9"/><rect x="48.4" y="25.5" width="3.3" height="23.8" fill="#B2B0B3"/><rect x="51.7" y="25.5" width="2.7" height="23.8" fill="#D8D5D9"/><rect x="57.6" y="18.7" width="3.3" height="30.6" fill="#B2B0B3"/><rect x="60.9" y="18.7" width="2.7" height="30.6" fill="#D8D5D9"/><rect x="66.8" y="17.1" width="3.3" height="32.2" fill="#B2B0B3"/><rect x="70.1" y="17.1" width="2.7" height="32.2" fill="#D8D5D9"/><rect x="76.0" y="16.5" width="3.3" height="32.8" fill="#B2B0B3"/><rect x="79.3" y="16.5" width="2.7" height="32.8" fill="#D8D5D9"/><rect x="85.2" y="26.6" width="3.3" height="22.7" fill="#B2B0B3"/><rect x="88.5" y="26.6" width="2.7" height="22.7" fill="#D8D5D9"/><rect x="94.4" y="35.3" width="3.3" height="14.0" fill="#B2B0B3"/><rect x="97.7" y="35.3" width="2.7" height="14.0" fill="#D8D5D9"/><rect x="103.6" y="45.3" width="3.3" height="4.0" fill="#B2B0B3"/><rect x="106.9" y="45.3" width="2.7" height="4.0" fill="#D8D5D9"/><path d="M8 49.3H121" stroke="#B3B0B4" stroke-width="1.1"/><rect x="11" y="50.099999999999994" width="14" height="5.4" fill="#B2B0B3" opacity="0.85"/><path d="M28.0 57.8L33.0 51.8" stroke="#B3B0B4" stroke-width="0.8" opacity="0.75"/><path d="M37.2 57.8L42.2 51.8" stroke="#B3B0B4" stroke-width="0.8" opacity="0.75"/><path d="M46.4 57.8L51.4 51.8" stroke="#B3B0B4" stroke-width="0.8" opacity="0.75"/><path d="M55.6 57.8L60.6 51.8" stroke="#B3B0B4" stroke-width="0.8" opacity="0.75"/><path d="M64.8 57.8L69.8 51.8" stroke="#B3B0B4" stroke-width="0.8" opacity="0.75"/><path d="M74.0 57.8L79.0 51.8" stroke="#B3B0B4" stroke-width="0.8" opacity="0.75"/><path d="M83.2 57.8L88.2 51.8" stroke="#B3B0B4" stroke-width="0.8" opacity="0.75"/><path d="M92.4 57.8L97.4 51.8" stroke="#B3B0B4" stroke-width="0.8" opacity="0.75"/><path d="M101.6 57.8L106.6 51.8" stroke="#B3B0B4" stroke-width="0.8" opacity="0.75"/><path d="M110.8 57.8L115.8 51.8" stroke="#B3B0B4" stroke-width="0.8" opacity="0.75"/></svg>
<svg style="left:1346.3px;top:149px;" width="125" height="75" viewBox="0 0 125 75"><defs><radialGradient id="gd" cx="50%" cy="45%" r="75%"><stop offset="0" stop-color="#8D8D8D"/><stop offset="1" stop-color="#747474"/></radialGradient></defs><rect x="0" y="0" width="125" height="75" fill="url(#gd)" stroke="#7A7A7A" stroke-width="1"/><path d="M9 12.9H120" stroke="#909090" stroke-width="0.8"/><path d="M9 19.7H120" stroke="#909090" stroke-width="0.8"/><path d="M9 27.2H120" stroke="#909090" stroke-width="0.8"/><path d="M9 34.4H120" stroke="#909090" stroke-width="0.8"/><path d="M9 41.2H120" stroke="#909090" stroke-width="0.8"/><path d="M9 56H120" stroke="#909090" stroke-width="0.8"/><path d="M9 62.7H120" stroke="#909090" stroke-width="0.8"/><rect x="43" y="4.2" width="40" height="3.2" fill="#E0E0E0" opacity="0.62"/><rect x="47" y="68" width="32" height="1.7" fill="#E0E0E0" opacity="0.5"/><rect x="39.2" y="35.7" width="3.3" height="13.6" fill="#C2C2C2"/><rect x="42.5" y="35.7" width="2.7" height="13.6" fill="#E2E2E2"/><rect x="48.4" y="25.5" width="3.3" height="23.8" fill="#C2C2C2"/><rect x="51.7" y="25.5" width="2.7" height="23.8" fill="#E2E2E2"/><rect x="57.6" y="18.7" width="3.3" height="30.6" fill="#C2C2C2"/><rect x="60.9" y="18.7" width="2.7" height="30.6" fill="#E2E2E2"/><rect x="66.8" y="17.1" width="3.3" height="32.2" fill="#C2C2C2"/><rect x="70.1" y="17.1" width="2.7" height="32.2" fill="#E2E2E2"/><rect x="76.0" y="16.5" width="3.3" height="32.8" fill="#C2C2C2"/><rect x="79.3" y="16.5" width="2.7" height="32.8" fill="#E2E2E2"/><rect x="85.2" y="26.6" width="3.3" height="22.7" fill="#C2C2C2"/><rect x="88.5" y="26.6" width="2.7" height="22.7" fill="#E2E2E2"/><rect x="94.4" y="35.3" width="3.3" height="14.0" fill="#C2C2C2"/><rect x="97.7" y="35.3" width="2.7" height="14.0" fill="#E2E2E2"/><rect x="103.6" y="45.3" width="3.3" height="4.0" fill="#C2C2C2"/><rect x="106.9" y="45.3" width="2.7" height="4.0" fill="#E2E2E2"/><path d="M8 49.3H121" stroke="#C4C4C4" stroke-width="1.1"/><rect x="11" y="50.099999999999994" width="14" height="5.4" fill="#C2C2C2" opacity="0.85"/><path d="M28.0 57.8L33.0 51.8" stroke="#C4C4C4" stroke-width="0.8" opacity="0.75"/><path d="M37.2 57.8L42.2 51.8" stroke="#C4C4C4" stroke-width="0.8" opacity="0.75"/><path d="M46.4 57.8L51.4 51.8" stroke="#C4C4C4" stroke-width="0.8" opacity="0.75"/><path d="M55.6 57.8L60.6 51.8" stroke="#C4C4C4" stroke-width="0.8" opacity="0.75"/><path d="M64.8 57.8L69.8 51.8" stroke="#C4C4C4" stroke-width="0.8" opacity="0.75"/><path d="M74.0 57.8L79.0 51.8" stroke="#C4C4C4" stroke-width="0.8" opacity="0.75"/><path d="M83.2 57.8L88.2 51.8" stroke="#C4C4C4" stroke-width="0.8" opacity="0.75"/><path d="M92.4 57.8L97.4 51.8" stroke="#C4C4C4" stroke-width="0.8" opacity="0.75"/><path d="M101.6 57.8L106.6 51.8" stroke="#C4C4C4" stroke-width="0.8" opacity="0.75"/><path d="M110.8 57.8L115.8 51.8" stroke="#C4C4C4" stroke-width="0.8" opacity="0.75"/></svg>
<svg style="left:1495.5px;top:184.5px;" width="10" height="6" viewBox="0 0 10 6"><path d="M0.5 0.5L5.0 5.5L9.5 0.5" fill="none" stroke="#9A9A9A" stroke-width="1.5"/></svg>
<svg style="left:1583px;top:137px;" width="52" height="48" viewBox="0 0 52 48"><g stroke="#A6A6A6" stroke-width="1.5">
      <rect x="5" y="9.5" width="43" height="34" fill="#F1F1F1"/>
      <rect x="19.4" y="9.5" width="28.6" height="11.5" fill="#DADADA"/>
      <rect x="5" y="21" width="14.4" height="22.5" fill="#DADADA"/>
      <path d="M19.4 9.5V43.5M33.7 9.5V43.5M5 21H48M5 32.3H48" fill="none"/></g>
      <path d="M0 9L10 0L27 0L27 8L8 27L0 27Z" fill="#fff"/>
      <g fill="none" stroke="#A6A6A6" stroke-width="1.6"><path d="M8.5 7.5H24.5M19 2L24.8 7.5L19 13"/><path d="M8.5 7.5V25M2.5 19L8.5 25.5L25 9.5"/></g></svg>
<span class="t" style="left:1553.00px;top:205.36px;font-size:18px;line-height:18px;color:#B9B9B9;transform:scaleX(1.0256);transform-origin:0 50%;">Перевернути</span>
<span class="t" style="left:1594.00px;top:229.36px;font-size:18px;line-height:18px;color:#B9B9B9;transform:scaleX(0.9799);transform-origin:0 50%;">вісь</span>
<svg style="left:1683px;top:144px;" width="52" height="48" viewBox="0 0 52 48"><g stroke="#A6A6A6" stroke-width="1.5">
      <rect x="3" y="2.5" width="43.3" height="34" fill="#F1F1F1"/>
      <rect x="3" y="2.5" width="28.8" height="22.6" fill="#D6D6D6"/>
      <path d="M17.4 2.5V36.5M31.8 2.5V36.5M3 13.8H46.3M3 25.1H46.3" fill="none"/></g>
      <path d="M25 31.5H33V20.5H41V26H49V44.5H25Z" fill="#fff" stroke="#fff" stroke-width="5" stroke-linejoin="miter"/>
      <g stroke="#A6A6A6" stroke-width="1.5"><rect x="25" y="31.5" width="8" height="13" fill="#D6D6D6"/><rect x="33" y="20.5" width="8" height="24" fill="#F1F1F1"/><rect x="41" y="26" width="8" height="18.5" fill="#D6D6D6"/></g></svg>
<span class="t" style="left:1672.60px;top:205.36px;font-size:18px;line-height:18px;color:#B9B9B9;transform:scaleX(0.9858);transform-origin:0 50%;">Вибрати</span>
<span class="t" style="left:1690.20px;top:229.36px;font-size:18px;line-height:18px;color:#B9B9B9;transform:scaleX(0.9809);transform-origin:0 50%;">дані</span>
<svg style="left:1798px;top:139px;" width="44" height="50" viewBox="0 0 44 50"><g stroke="#A6A6A6" stroke-width="1.5">
      <rect x="2.5" y="21" width="12.8" height="25" fill="#D8D8D8"/>
      <rect x="15.3" y="3.4" width="13.2" height="42.6" fill="#F1F1F1"/>
      <rect x="28.5" y="11.2" width="12.8" height="34.8" fill="#DCDCDC"/></g></svg>
<span class="t" style="left:1770.80px;top:205.36px;font-size:18px;line-height:18px;color:#B9B9B9;transform:scaleX(1.0143);transform-origin:0 50%;">Змінити тип</span>
<span class="t" style="left:1783.30px;top:229.36px;font-size:18px;line-height:18px;color:#B9B9B9;transform:scaleX(1.0118);transform-origin:0 50%;">діаграми</span>
<svg style="left:1926px;top:141px;" width="52" height="50" viewBox="0 0 52 50"><g stroke="#A6A6A6" stroke-width="1.5">
      <path d="M3 2.6H46.3V40.5H12L3 40.5Z" fill="#F1F1F1"/>
      <path d="M17.4 2.6V34M31.8 2.6V34M3 13.5H46.3M3 24H46.3M3 34.5H22L17 40.5" fill="none"/></g>
      <path d="M25 34H33V23.5H41V29H49V47H25Z" fill="#fff" stroke="#fff" stroke-width="5" stroke-linejoin="miter"/>
      <path d="M3 34.5H22.5L17.5 40.5H3Z" fill="#F1F1F1" stroke="#A6A6A6" stroke-width="1.5"/>
      <g stroke="#A6A6A6" stroke-width="1.5"><rect x="25" y="34" width="8" height="13" fill="#D6D6D6"/><rect x="33" y="23.5" width="8" height="23.5" fill="#F1F1F1"/><rect x="41" y="29" width="8" height="18" fill="#D6D6D6"/></g></svg>
<span class="t" style="left:1898.20px;top:205.36px;font-size:18px;line-height:18px;color:#B9B9B9;transform:scaleX(1.0081);transform-origin:0 50%;">Перемістити</span>
<span class="t" style="left:1913.80px;top:229.36px;font-size:18px;line-height:18px;color:#B9B9B9;transform:scaleX(1.0071);transform-origin:0 50%;">діаграму</span>
<span class="t" style="left:81.90px;top:281.76px;font-size:16px;line-height:16px;color:#3A3A3A;transform:scaleX(1.0384);transform-origin:0 50%;">Макети діаграм</span>
<span class="t" style="left:850.00px;top:281.76px;font-size:16px;line-height:16px;color:#3A3A3A;transform:scaleX(1.0238);transform-origin:0 50%;">Стилі діаграм</span>
<span class="t" style="left:1630.20px;top:281.66px;font-size:16px;line-height:16px;color:#3A3A3A;transform:scaleX(1.0646);transform-origin:0 50%;">Дані</span>
<span class="t" style="left:1806.00px;top:281.66px;font-size:16px;line-height:16px;color:#3A3A3A;transform:scaleX(1.0385);transform-origin:0 50%;">Тип</span>
<span class="t" style="left:1895.60px;top:281.66px;font-size:16px;line-height:16px;color:#3A3A3A;transform:scaleX(1.0238);transform-origin:0 50%;">Розташування</span>
<svg style="left:2507.5px;top:279px;" width="16" height="9" viewBox="0 0 16 9"><path d="M0.5 0.5L8.0 8.5L15.5 0.5" fill="none" stroke="#333" stroke-width="1.7"/></svg>
<div style="left:12.5px;top:317px;width:157px;height:33.5px;background:#fff;border:1px solid #E3E3E3;border-radius:7px;"></div>
<span class="t" style="left:18.00px;top:325.05px;font-size:20.5px;line-height:20.5px;color:#1E1E1E;transform:scaleX(0.9541);transform-origin:0 50%;">B12</span>
<svg style="left:146px;top:331px;" width="17" height="9" viewBox="0 0 17 9"><path d="M1 1L8.3 7.8L15.6 1" fill="none" stroke="#333" stroke-width="1.6"/></svg>
<div style="left:183.7px;top:326.2px;width:3.6px;height:3.6px;background:#444;"></div>
<div style="left:183.7px;top:332.2px;width:3.6px;height:3.6px;background:#444;"></div>
<div style="left:183.7px;top:338.2px;width:3.6px;height:3.6px;background:#444;"></div>
<div style="left:201.5px;top:317px;width:112.5px;height:33.5px;background:#fff;border:1px solid #E3E3E3;border-radius:7px;"></div>
<svg style="left:211px;top:324px;" width="19" height="19" viewBox="0 0 19 19"><path d="M0.5 0.5L18.5 18.5M18.5 0.5L0.5 18.5" stroke="#ADADAD" stroke-width="1.5"/></svg>
<svg style="left:246px;top:324px;" width="25" height="18" viewBox="0 0 25 18"><path d="M0.5 9.5L8 17L24.3 0.7" fill="none" stroke="#ADADAD" stroke-width="1.5"/></svg>
<span class="t" style="left:284.80px;top:319.74px;font-size:27px;line-height:27px;color:#2E2E2E;transform:scaleX(1.1033);transform-origin:0 50%;font-style:italic;font-family:'Liberation Serif',serif;-webkit-text-stroke:0.45px #2E2E2E;">fx</span>
<div style="left:321px;top:317px;width:2227px;height:33.5px;background:#fff;border:1px solid #E3E3E3;border-radius:7px;"></div>
<span class="t" style="left:338.30px;top:325.05px;font-size:20.5px;line-height:20.5px;color:#1E1E1E;">Середньомісячна температура в Україні</span>
<svg style="left:2525px;top:328.6px;" width="16" height="9" viewBox="0 0 16 9"><path d="M1 1L8 7.8L15 1" fill="none" stroke="#8A8A8A" stroke-width="1.5"/></svg>
<div style="left:42.2px;top:391px;width:2488.3px;height:948.3px;background:#fff;"></div>
<div style="left:3px;top:361.5px;width:2527px;height:29.5px;background:#F0F0F0;"></div>
<div style="left:3px;top:390px;width:2527.5px;height:1.2px;background:#C6C6C6;"></div>
<svg style="left:14px;top:363px;" width="28" height="27" viewBox="0 0 28 27"><path d="M25.8 1.5V25.7H1.2Z" fill="#B3B3B3"/></svg>
<div style="left:42px;top:361.5px;width:1.2px;height:30px;background:#9C9C9C;"></div>
<span class="t" style="left:56.90px;top:366.22px;font-size:21px;line-height:21px;color:#1E1E1E;">A</span>
<div style="left:85.0px;top:361.8px;width:1.2px;height:28.2px;background:#CDCDCD;"></div>
<span class="t" style="left:201.55px;top:366.22px;font-size:21px;line-height:21px;color:#1E1E1E;">B</span>
<div style="left:330.9px;top:361.8px;width:1.2px;height:28.2px;background:#CDCDCD;"></div>
<span class="t" style="left:446.92px;top:366.22px;font-size:21px;line-height:21px;color:#1E1E1E;">C</span>
<div style="left:576.9px;top:361.8px;width:1.2px;height:28.2px;background:#CDCDCD;"></div>
<span class="t" style="left:692.42px;top:366.22px;font-size:21px;line-height:21px;color:#1E1E1E;">D</span>
<div style="left:821.9px;top:361.8px;width:1.2px;height:28.2px;background:#CDCDCD;"></div>
<span class="t" style="left:938.40px;top:366.22px;font-size:21px;line-height:21px;color:#1E1E1E;">E</span>
<div style="left:1067.7px;top:361.8px;width:1.2px;height:28.2px;background:#CDCDCD;"></div>
<span class="t" style="left:1113.45px;top:366.22px;font-size:21px;line-height:21px;color:#1E1E1E;">F</span>
<div style="left:1170.8200000000002px;top:361.8px;width:1.2px;height:28.2px;background:#CDCDCD;"></div>
<span class="t" style="left:1214.81px;top:366.22px;font-size:21px;line-height:21px;color:#1E1E1E;">G</span>
<div style="left:1273.94px;top:361.8px;width:1.2px;height:28.2px;background:#CDCDCD;"></div>
<span class="t" style="left:1318.52px;top:366.22px;font-size:21px;line-height:21px;color:#1E1E1E;">H</span>
<div style="left:1377.06px;top:361.8px;width:1.2px;height:28.2px;background:#CDCDCD;"></div>
<span class="t" style="left:1426.30px;top:366.22px;font-size:21px;line-height:21px;color:#1E1E1E;">I</span>
<div style="left:1480.1799999999998px;top:361.8px;width:1.2px;height:28.2px;background:#CDCDCD;"></div>
<span class="t" style="left:1527.09px;top:366.22px;font-size:21px;line-height:21px;color:#1E1E1E;">J</span>
<div style="left:1583.2999999999997px;top:361.8px;width:1.2px;height:28.2px;background:#CDCDCD;"></div>
<span class="t" style="left:1628.46px;top:366.22px;font-size:21px;line-height:21px;color:#1E1E1E;">K</span>
<div style="left:1686.4199999999996px;top:361.8px;width:1.2px;height:28.2px;background:#CDCDCD;"></div>
<span class="t" style="left:1732.74px;top:366.22px;font-size:21px;line-height:21px;color:#1E1E1E;">L</span>
<div style="left:1789.5399999999995px;top:361.8px;width:1.2px;height:28.2px;background:#CDCDCD;"></div>
<span class="t" style="left:1832.95px;top:366.22px;font-size:21px;line-height:21px;color:#1E1E1E;">M</span>
<div style="left:1892.6599999999994px;top:361.8px;width:1.2px;height:28.2px;background:#CDCDCD;"></div>
<span class="t" style="left:1937.24px;top:366.22px;font-size:21px;line-height:21px;color:#1E1E1E;">N</span>
<div style="left:1995.7799999999993px;top:361.8px;width:1.2px;height:28.2px;background:#CDCDCD;"></div>
<span class="t" style="left:2039.77px;top:366.22px;font-size:21px;line-height:21px;color:#1E1E1E;">O</span>
<div style="left:2098.899999999999px;top:361.8px;width:1.2px;height:28.2px;background:#CDCDCD;"></div>
<span class="t" style="left:2144.06px;top:366.22px;font-size:21px;line-height:21px;color:#1E1E1E;">P</span>
<div style="left:2202.019999999999px;top:361.8px;width:1.2px;height:28.2px;background:#CDCDCD;"></div>
<span class="t" style="left:2246.01px;top:366.22px;font-size:21px;line-height:21px;color:#1E1E1E;">Q</span>
<div style="left:2305.139999999999px;top:361.8px;width:1.2px;height:28.2px;background:#CDCDCD;"></div>
<span class="t" style="left:2349.72px;top:366.22px;font-size:21px;line-height:21px;color:#1E1E1E;">R</span>
<div style="left:2408.259999999999px;top:361.8px;width:1.2px;height:28.2px;background:#CDCDCD;"></div>
<span class="t" style="left:2453.42px;top:366.22px;font-size:21px;line-height:21px;color:#1E1E1E;">S</span>
<div style="left:2511.3799999999987px;top:361.8px;width:1.2px;height:28.2px;background:#CDCDCD;"></div>
<div style="left:85.6px;top:389.2px;width:983px;height:2.2px;background:#177D43;"></div>
<div style="left:3px;top:391px;width:39.2px;height:948.3px;background:#F0F0F0;"></div>
<div style="left:42px;top:391px;width:1.2px;height:948.3px;background:#C9C9C9;"></div>
<span class="t" style="left:15.76px;top:396.12px;font-size:21px;line-height:21px;color:#1E1E1E;">1</span>
<div style="left:3px;top:420.4px;width:39.2px;height:1.2px;background:#D2D2D2;"></div>
<span class="t" style="left:15.76px;top:426.12px;font-size:21px;line-height:21px;color:#1E1E1E;">2</span>
<div style="left:3px;top:450.4px;width:39.2px;height:1.2px;background:#D2D2D2;"></div>
<span class="t" style="left:15.76px;top:456.12px;font-size:21px;line-height:21px;color:#1E1E1E;">3</span>
<div style="left:3px;top:480.4px;width:39.2px;height:1.2px;background:#D2D2D2;"></div>
<span class="t" style="left:15.76px;top:486.12px;font-size:21px;line-height:21px;color:#1E1E1E;">4</span>
<div style="left:3px;top:510.4px;width:39.2px;height:1.2px;background:#D2D2D2;"></div>
<span class="t" style="left:15.76px;top:516.12px;font-size:21px;line-height:21px;color:#1E1E1E;">5</span>
<div style="left:3px;top:540.4px;width:39.2px;height:1.2px;background:#D2D2D2;"></div>
<span class="t" style="left:15.76px;top:546.12px;font-size:21px;line-height:21px;color:#1E1E1E;">6</span>
<div style="left:3px;top:570.4px;width:39.2px;height:1.2px;background:#D2D2D2;"></div>
<span class="t" style="left:15.76px;top:576.12px;font-size:21px;line-height:21px;color:#1E1E1E;">7</span>
<div style="left:3px;top:600.4px;width:39.2px;height:1.2px;background:#D2D2D2;"></div>
<span class="t" style="left:15.76px;top:606.12px;font-size:21px;line-height:21px;color:#1E1E1E;">8</span>
<div style="left:3px;top:630.4px;width:39.2px;height:1.2px;background:#D2D2D2;"></div>
<span class="t" style="left:15.76px;top:636.12px;font-size:21px;line-height:21px;color:#1E1E1E;">9</span>
<div style="left:3px;top:660.4px;width:39.2px;height:1.2px;background:#D2D2D2;"></div>
<span class="t" style="left:9.92px;top:666.12px;font-size:21px;line-height:21px;color:#1E1E1E;">10</span>
<div style="left:3px;top:690.4px;width:39.2px;height:1.2px;background:#D2D2D2;"></div>
<span class="t" style="left:10.70px;top:746.32px;font-size:21px;line-height:21px;color:#1E1E1E;">11</span>
<div style="left:3px;top:772.0px;width:39.2px;height:1.2px;background:#D2D2D2;"></div>
<span class="t" style="left:9.92px;top:778.78px;font-size:21px;line-height:21px;color:#1E1E1E;">12</span>
<div style="left:3px;top:803.86px;width:39.2px;height:1.2px;background:#D2D2D2;"></div>
<span class="t" style="left:9.92px;top:810.64px;font-size:21px;line-height:21px;color:#1E1E1E;">13</span>
<div style="left:3px;top:835.72px;width:39.2px;height:1.2px;background:#D2D2D2;"></div>
<span class="t" style="left:9.92px;top:842.50px;font-size:21px;line-height:21px;color:#1E1E1E;">14</span>
<div style="left:3px;top:867.58px;width:39.2px;height:1.2px;background:#D2D2D2;"></div>
<span class="t" style="left:9.92px;top:874.36px;font-size:21px;line-height:21px;color:#1E1E1E;">15</span>
<div style="left:3px;top:899.44px;width:39.2px;height:1.2px;background:#D2D2D2;"></div>
<span class="t" style="left:9.92px;top:906.22px;font-size:21px;line-height:21px;color:#1E1E1E;">16</span>
<div style="left:3px;top:931.3000000000001px;width:39.2px;height:1.2px;background:#D2D2D2;"></div>
<span class="t" style="left:9.92px;top:938.08px;font-size:21px;line-height:21px;color:#1E1E1E;">17</span>
<div style="left:3px;top:963.1600000000001px;width:39.2px;height:1.2px;background:#D2D2D2;"></div>
<span class="t" style="left:9.92px;top:969.94px;font-size:21px;line-height:21px;color:#1E1E1E;">18</span>
<div style="left:3px;top:995.0200000000001px;width:39.2px;height:1.2px;background:#D2D2D2;"></div>
<span class="t" style="left:9.92px;top:1001.80px;font-size:21px;line-height:21px;color:#1E1E1E;">19</span>
<div style="left:3px;top:1026.88px;width:39.2px;height:1.2px;background:#D2D2D2;"></div>
<span class="t" style="left:9.92px;top:1033.66px;font-size:21px;line-height:21px;color:#1E1E1E;">20</span>
<div style="left:3px;top:1058.74px;width:39.2px;height:1.2px;background:#D2D2D2;"></div>
<span class="t" style="left:9.92px;top:1065.52px;font-size:21px;line-height:21px;color:#1E1E1E;">21</span>
<div style="left:3px;top:1090.6px;width:39.2px;height:1.2px;background:#D2D2D2;"></div>
<span class="t" style="left:9.92px;top:1097.38px;font-size:21px;line-height:21px;color:#1E1E1E;">22</span>
<div style="left:3px;top:1122.4599999999998px;width:39.2px;height:1.2px;background:#D2D2D2;"></div>
<span class="t" style="left:9.92px;top:1129.24px;font-size:21px;line-height:21px;color:#1E1E1E;">23</span>
<div style="left:3px;top:1154.3199999999997px;width:39.2px;height:1.2px;background:#D2D2D2;"></div>
<span class="t" style="left:9.92px;top:1161.10px;font-size:21px;line-height:21px;color:#1E1E1E;">24</span>
<div style="left:3px;top:1186.1799999999996px;width:39.2px;height:1.2px;background:#D2D2D2;"></div>
<span class="t" style="left:9.92px;top:1191.90px;font-size:21px;line-height:21px;color:#1E1E1E;">25</span>
<div style="left:3px;top:1216.1799999999996px;width:39.2px;height:1.2px;background:#D2D2D2;"></div>
<span class="t" style="left:9.92px;top:1221.90px;font-size:21px;line-height:21px;color:#1E1E1E;">26</span>
<div style="left:3px;top:1246.1799999999996px;width:39.2px;height:1.2px;background:#D2D2D2;"></div>
<span class="t" style="left:9.92px;top:1251.90px;font-size:21px;line-height:21px;color:#1E1E1E;">27</span>
<div style="left:3px;top:1276.1799999999996px;width:39.2px;height:1.2px;background:#D2D2D2;"></div>
<span class="t" style="left:9.92px;top:1281.90px;font-size:21px;line-height:21px;color:#1E1E1E;">28</span>
<div style="left:3px;top:1306.1799999999996px;width:39.2px;height:1.2px;background:#D2D2D2;"></div>
<span class="t" style="left:9.92px;top:1311.90px;font-size:21px;line-height:21px;color:#1E1E1E;">29</span>
<div style="left:3px;top:1336.1799999999996px;width:39.2px;height:1.2px;background:#D2D2D2;"></div>
<div style="left:41px;top:690.8px;width:2px;height:82px;background:#177D43;"></div>
<div style="left:331.5px;top:772.6px;width:736.8px;height:31.860000000000014px;background:#177D43;"></div>
<div style="left:85.6px;top:772.6px;width:245.9px;height:31.860000000000014px;background:#fff;"></div>
<div style="left:85.6px;top:804.46px;width:245.9px;height:382.3199999999995px;background:#177D43;"></div>
<span class="t" style="left:90.50px;top:809.55px;font-size:24.3px;line-height:24.3px;color:#fff;transform:scaleX(1.0504);transform-origin:0 50%;font-weight:700;font-style:italic;">Січень</span>
<span class="t" style="left:433.39px;top:809.38px;font-size:24.5px;line-height:24.5px;color:#111;">-4,5</span>
<span class="t" style="left:678.89px;top:809.38px;font-size:24.5px;line-height:24.5px;color:#111;">-5,3</span>
<span class="t" style="left:924.29px;top:809.38px;font-size:24.5px;line-height:24.5px;color:#111;">-6,2</span>
<span class="t" style="left:90.50px;top:841.41px;font-size:24.3px;line-height:24.3px;color:#fff;transform:scaleX(0.9040);transform-origin:0 50%;font-weight:700;font-style:italic;">Лютий</span>
<span class="t" style="left:433.39px;top:841.24px;font-size:24.5px;line-height:24.5px;color:#111;">-3,8</span>
<span class="t" style="left:678.89px;top:841.24px;font-size:24.5px;line-height:24.5px;color:#111;">-2,9</span>
<span class="t" style="left:924.29px;top:841.24px;font-size:24.5px;line-height:24.5px;color:#111;">-4,1</span>
<span class="t" style="left:90.50px;top:873.27px;font-size:24.3px;line-height:24.3px;color:#fff;transform:scaleX(1.0129);transform-origin:0 50%;font-weight:700;font-style:italic;">Березень</span>
<span class="t" style="left:437.47px;top:873.10px;font-size:24.5px;line-height:24.5px;color:#111;">2,7</span>
<span class="t" style="left:682.97px;top:873.10px;font-size:24.5px;line-height:24.5px;color:#111;">6,3</span>
<span class="t" style="left:928.37px;top:873.10px;font-size:24.5px;line-height:24.5px;color:#111;">0,5</span>
<span class="t" style="left:90.50px;top:905.13px;font-size:24.3px;line-height:24.3px;color:#fff;font-weight:700;font-style:italic;">Квітень</span>
<span class="t" style="left:430.66px;top:904.96px;font-size:24.5px;line-height:24.5px;color:#111;">12,5</span>
<span class="t" style="left:682.97px;top:904.96px;font-size:24.5px;line-height:24.5px;color:#111;">9,9</span>
<span class="t" style="left:921.56px;top:904.96px;font-size:24.5px;line-height:24.5px;color:#111;">13,3</span>
<span class="t" style="left:90.50px;top:936.99px;font-size:24.3px;line-height:24.3px;color:#fff;transform:scaleX(1.0295);transform-origin:0 50%;font-weight:700;font-style:italic;">Травень</span>
<span class="t" style="left:430.66px;top:936.82px;font-size:24.5px;line-height:24.5px;color:#111;">15,2</span>
<span class="t" style="left:676.16px;top:936.82px;font-size:24.5px;line-height:24.5px;color:#111;">15,5</span>
<span class="t" style="left:921.56px;top:936.82px;font-size:24.5px;line-height:24.5px;color:#111;">18,3</span>
<span class="t" style="left:90.50px;top:968.85px;font-size:24.3px;line-height:24.3px;color:#fff;transform:scaleX(0.9604);transform-origin:0 50%;font-weight:700;font-style:italic;">Червень</span>
<span class="t" style="left:430.66px;top:968.68px;font-size:24.5px;line-height:24.5px;color:#111;">20,3</span>
<span class="t" style="left:676.16px;top:968.68px;font-size:24.5px;line-height:24.5px;color:#111;">21,7</span>
<span class="t" style="left:921.56px;top:968.68px;font-size:24.5px;line-height:24.5px;color:#111;">20,8</span>
<span class="t" style="left:90.50px;top:1000.71px;font-size:24.3px;line-height:24.3px;color:#fff;transform:scaleX(0.9852);transform-origin:0 50%;font-weight:700;font-style:italic;">Липень</span>
<span class="t" style="left:430.66px;top:1000.54px;font-size:24.5px;line-height:24.5px;color:#111;">22,3</span>
<span class="t" style="left:676.16px;top:1000.54px;font-size:24.5px;line-height:24.5px;color:#111;">21,9</span>
<span class="t" style="left:921.56px;top:1000.54px;font-size:24.5px;line-height:24.5px;color:#111;">22,1</span>
<span class="t" style="left:90.50px;top:1032.57px;font-size:24.3px;line-height:24.3px;color:#fff;transform:scaleX(0.9500);transform-origin:0 50%;font-weight:700;font-style:italic;">Серпень</span>
<span class="t" style="left:430.66px;top:1032.40px;font-size:24.5px;line-height:24.5px;color:#111;">21,5</span>
<span class="t" style="left:676.16px;top:1032.40px;font-size:24.5px;line-height:24.5px;color:#111;">23,2</span>
<span class="t" style="left:921.56px;top:1032.40px;font-size:24.5px;line-height:24.5px;color:#111;">21,9</span>
<span class="t" style="left:90.50px;top:1064.43px;font-size:24.3px;line-height:24.3px;color:#fff;transform:scaleX(0.9580);transform-origin:0 50%;font-weight:700;font-style:italic;">Вересень</span>
<span class="t" style="left:430.66px;top:1064.26px;font-size:24.5px;line-height:24.5px;color:#111;">15,8</span>
<span class="t" style="left:676.16px;top:1064.26px;font-size:24.5px;line-height:24.5px;color:#111;">14,2</span>
<span class="t" style="left:921.56px;top:1064.26px;font-size:24.5px;line-height:24.5px;color:#111;">13,9</span>
<span class="t" style="left:90.50px;top:1096.29px;font-size:24.3px;line-height:24.3px;color:#fff;font-weight:700;font-style:italic;">Жовтень</span>
<span class="t" style="left:437.47px;top:1096.12px;font-size:24.5px;line-height:24.5px;color:#111;">9,3</span>
<span class="t" style="left:682.97px;top:1096.12px;font-size:24.5px;line-height:24.5px;color:#111;">8,9</span>
<span class="t" style="left:928.37px;top:1096.12px;font-size:24.5px;line-height:24.5px;color:#111;">9,5</span>
<span class="t" style="left:90.50px;top:1128.15px;font-size:24.3px;line-height:24.3px;color:#fff;transform:scaleX(0.9855);transform-origin:0 50%;font-weight:700;font-style:italic;">Листопад</span>
<span class="t" style="left:437.47px;top:1127.98px;font-size:24.5px;line-height:24.5px;color:#111;">2,9</span>
<span class="t" style="left:682.97px;top:1127.98px;font-size:24.5px;line-height:24.5px;color:#111;">2,4</span>
<span class="t" style="left:928.37px;top:1127.98px;font-size:24.5px;line-height:24.5px;color:#111;">1,9</span>
<span class="t" style="left:90.50px;top:1160.01px;font-size:24.3px;line-height:24.3px;color:#fff;transform:scaleX(0.9801);transform-origin:0 50%;font-weight:700;font-style:italic;">Грудень</span>
<span class="t" style="left:433.39px;top:1159.84px;font-size:24.5px;line-height:24.5px;color:#111;">-1,4</span>
<span class="t" style="left:678.89px;top:1159.84px;font-size:24.5px;line-height:24.5px;color:#111;">-2,4</span>
<span class="t" style="left:924.29px;top:1159.84px;font-size:24.5px;line-height:24.5px;color:#111;">-3,2</span>
<span class="t" style="left:427.53px;top:777.69px;font-size:24.3px;line-height:24.3px;color:#fff;font-weight:700;">2016</span>
<span class="t" style="left:673.03px;top:777.69px;font-size:24.3px;line-height:24.3px;color:#fff;font-weight:700;">2017</span>
<span class="t" style="left:918.43px;top:777.69px;font-size:24.3px;line-height:24.3px;color:#fff;font-weight:700;">2018</span>
<div style="left:331.5px;top:803.86px;width:736.8px;height:1.2px;background:#5FA37E;"></div>
<div style="left:331.5px;top:835.72px;width:736.8px;height:1.2px;background:#5FA37E;"></div>
<div style="left:85.6px;top:835.72px;width:245.9px;height:1.2px;background:rgba(255,255,255,0.55);"></div>
<div style="left:331.5px;top:867.58px;width:736.8px;height:1.2px;background:#5FA37E;"></div>
<div style="left:85.6px;top:867.58px;width:245.9px;height:1.2px;background:rgba(255,255,255,0.55);"></div>
<div style="left:331.5px;top:899.44px;width:736.8px;height:1.2px;background:#5FA37E;"></div>
<div style="left:85.6px;top:899.44px;width:245.9px;height:1.2px;background:rgba(255,255,255,0.55);"></div>
<div style="left:331.5px;top:931.3000000000001px;width:736.8px;height:1.2px;background:#5FA37E;"></div>
<div style="left:85.6px;top:931.3000000000001px;width:245.9px;height:1.2px;background:rgba(255,255,255,0.55);"></div>
<div style="left:331.5px;top:963.1600000000001px;width:736.8px;height:1.2px;background:#5FA37E;"></div>
<div style="left:85.6px;top:963.1600000000001px;width:245.9px;height:1.2px;background:rgba(255,255,255,0.55);"></div>
<div style="left:331.5px;top:995.0200000000001px;width:736.8px;height:1.2px;background:#5FA37E;"></div>
<div style="left:85.6px;top:995.0200000000001px;width:245.9px;height:1.2px;background:rgba(255,255,255,0.55);"></div>
<div style="left:331.5px;top:1026.88px;width:736.8px;height:1.2px;background:#5FA37E;"></div>
<div style="left:85.6px;top:1026.88px;width:245.9px;height:1.2px;background:rgba(255,255,255,0.55);"></div>
<div style="left:331.5px;top:1058.74px;width:736.8px;height:1.2px;background:#5FA37E;"></div>
<div style="left:85.6px;top:1058.74px;width:245.9px;height:1.2px;background:rgba(255,255,255,0.55);"></div>
<div style="left:331.5px;top:1090.6px;width:736.8px;height:1.2px;background:#5FA37E;"></div>
<div style="left:85.6px;top:1090.6px;width:245.9px;height:1.2px;background:rgba(255,255,255,0.55);"></div>
<div style="left:331.5px;top:1122.4599999999998px;width:736.8px;height:1.2px;background:#5FA37E;"></div>
<div style="left:85.6px;top:1122.4599999999998px;width:245.9px;height:1.2px;background:rgba(255,255,255,0.55);"></div>
<div style="left:331.5px;top:1154.3199999999997px;width:736.8px;height:1.2px;background:#5FA37E;"></div>
<div style="left:85.6px;top:1154.3199999999997px;width:245.9px;height:1.2px;background:rgba(255,255,255,0.55);"></div>
<div style="left:331.5px;top:1186.1799999999996px;width:736.8px;height:1.2px;background:#5FA37E;"></div>
<div style="left:330.9px;top:804.46px;width:1.2px;height:382.3199999999995px;background:#5FA37E;"></div>
<div style="left:576.9px;top:804.46px;width:1.2px;height:382.3199999999995px;background:#5FA37E;"></div>
<div style="left:821.9px;top:804.46px;width:1.2px;height:382.3199999999995px;background:#5FA37E;"></div>
<div style="left:1067.7px;top:772.6px;width:1.2px;height:414.1799999999995px;background:#5FA37E;"></div>
<svg style="left:84.6px;top:771.6px;" width="985" height="416.1799999999995" viewBox="0 0 985 416.1799999999995"><rect x="1" y="1" width="983" height="414.2" fill="none" stroke="#fff" stroke-width="1.3"/><rect x="1" y="1" width="983" height="414.2" fill="none" stroke="#2F7F55" stroke-width="1.3" stroke-dasharray="4 2.5"/></svg>
<div style="left:84.6px;top:689.6px;width:985.2px;height:84px;border:2px solid #23804C;"></div>
<div style="left:1064.3px;top:768.1px;width:5.6px;height:5.6px;background:#177D43;border:1.2px solid #fff;box-sizing:content-box;"></div>
<svg style="left:1102px;top:502px;" width="1358" height="691" viewBox="0 0 1358 691"><rect x="0.5" y="0.5" width="1357" height="690" fill="#fff" stroke="#D9D9D9" stroke-width="1.3"/><path d="M46 77.30H1334" stroke="#D9D9D9" stroke-width="1.3"/><path d="M46 154.73H1334" stroke="#D9D9D9" stroke-width="1.3"/><path d="M46 232.16H1334" stroke="#D9D9D9" stroke-width="1.3"/><path d="M46 309.59H1334" stroke="#D9D9D9" stroke-width="1.3"/><path d="M46 387.02H1334" stroke="#D9D9D9" stroke-width="1.3"/><path d="M46 464.45H1334" stroke="#D9D9D9" stroke-width="1.3"/><path d="M46 541.88H1334" stroke="#D9D9D9" stroke-width="1.3"/><path d="M46 619.31H1334" stroke="#D9D9D9" stroke-width="1.3"/><rect x="127.97" y="77.30" width="75.0" height="348.44" fill="#4472C4"/><rect x="223.17" y="77.30" width="75.0" height="294.23" fill="#ED7D31"/><rect x="318.37" y="77.30" width="75.0" height="108.40" fill="#43682B"/><rect x="557.30" y="77.30" width="75.0" height="410.38" fill="#4472C4"/><rect x="652.50" y="77.30" width="75.0" height="224.55" fill="#ED7D31"/><rect x="747.70" y="77.30" width="75.0" height="185.83" fill="#43682B"/><rect x="986.63" y="77.30" width="75.0" height="480.07" fill="#4472C4"/><rect x="1081.83" y="77.30" width="75.0" height="317.46" fill="#ED7D31"/><rect x="1177.03" y="77.30" width="75.0" height="247.78" fill="#43682B"/></svg>
<span class="t" style="left:1686.00px;top:522.99px;font-size:26px;line-height:26px;color:#595959;transform:scaleX(1.0145);transform-origin:0 50%;">Назва діаграми</span>
<span class="t" style="left:1122.04px;top:570.91px;font-size:17px;line-height:17px;color:#595959;">0</span>
<span class="t" style="left:1116.38px;top:648.34px;font-size:17px;line-height:17px;color:#595959;">-1</span>
<span class="t" style="left:1116.38px;top:725.77px;font-size:17px;line-height:17px;color:#595959;">-2</span>
<span class="t" style="left:1116.38px;top:803.20px;font-size:17px;line-height:17px;color:#595959;">-3</span>
<span class="t" style="left:1116.38px;top:880.63px;font-size:17px;line-height:17px;color:#595959;">-4</span>
<span class="t" style="left:1116.38px;top:958.06px;font-size:17px;line-height:17px;color:#595959;">-5</span>
<span class="t" style="left:1116.38px;top:1035.49px;font-size:17px;line-height:17px;color:#595959;">-6</span>
<span class="t" style="left:1116.38px;top:1112.92px;font-size:17px;line-height:17px;color:#595959;">-7</span>
<span class="t" style="left:1344.06px;top:596.01px;font-size:17px;line-height:17px;color:#595959;transform:scaleX(1.0048);transform-origin:50% 50%;">2016</span>
<span class="t" style="left:1773.39px;top:596.01px;font-size:17px;line-height:17px;color:#595959;transform:scaleX(1.0048);transform-origin:50% 50%;">2017</span>
<span class="t" style="left:2202.72px;top:596.01px;font-size:17px;line-height:17px;color:#595959;transform:scaleX(1.0048);transform-origin:50% 50%;">2018</span>
<div style="left:1660px;top:1157.1px;width:10.5px;height:10.5px;background:#4472C4;"></div>
<span class="t" style="left:1675.50px;top:1154.45px;font-size:16.6px;line-height:16.6px;color:#595959;transform:scaleX(0.9815);transform-origin:0 50%;">Січень</span>
<div style="left:1743.5px;top:1157.1px;width:10.5px;height:10.5px;background:#ED7D31;"></div>
<span class="t" style="left:1758.50px;top:1154.45px;font-size:16.6px;line-height:16.6px;color:#595959;transform:scaleX(1.0467);transform-origin:0 50%;">Лютий</span>
<div style="left:1828px;top:1157.1px;width:10.5px;height:10.5px;background:#43682B;"></div>
<span class="t" style="left:1843.50px;top:1154.45px;font-size:16.6px;line-height:16.6px;color:#595959;transform:scaleX(1.0377);transform-origin:0 50%;">Грудень</span>
<div style="left:105.5px;top:435.5px;width:938.6px;height:516.8px;background:#F0F0F0;border-radius:11px;box-shadow:0 0 0 1px rgba(80,80,80,0.30),0 44px 60px -22px rgba(0,0,0,0.43),3px 2px 24px rgba(0,0,0,0.115);overflow:hidden;"><div style="left:0;top:0;width:939px;height:43.5px;background:#F0F2F8;"></div></div>
<span class="t" style="left:116.00px;top:449.86px;font-size:18px;line-height:18px;color:#1A1A1A;transform:scaleX(1.0230);transform-origin:0 50%;">Вибір джерела даних</span>
<span class="t" style="left:931.00px;top:450.41px;font-size:17px;line-height:17px;color:#1A1A1A;transform:scaleX(0.7932);transform-origin:0 50%;">?</span>
<svg style="left:1000px;top:450px;" width="14" height="14" viewBox="0 0 14 14"><path d="M0.7 0.7L13.3 13.3M13.3 0.7L0.7 13.3" stroke="#1A1A1A" stroke-width="1.3"/></svg>
<span class="t" style="left:132.00px;top:503.41px;font-size:17px;line-height:17px;color:#1A1A1A;transform:scaleX(0.9948);transform-origin:0 50%;">Діапазон даних діаграми:</span>
<div style="left:345.3px;top:491.3px;width:673.7px;height:28px;background:#fff;border:1px solid #D4D4D4;border-bottom-color:#C4C4C4;"></div>
<div style="left:347.3px;top:494px;width:201px;height:23.5px;background:#C9C9C9;"></div>
<span class="t" style="left:349.00px;top:499.21px;font-size:17px;line-height:17px;color:#1A1A1A;transform:scaleX(0.9771);transform-origin:0 50%;">='Додаток 1'!$B$12:$E$24</span>
<div style="left:547.3px;top:494px;width:1.2px;height:23.5px;background:#111;"></div>
<div style="left:991.6px;top:491.8px;width:26.9px;height:27px;background:#FDFDFD;border:1px solid #D6D6D6;border-radius:2px;"></div>
<svg style="left:996px;top:492.5px;" width="18" height="25" viewBox="0 0 18 25"><path d="M1.8 10.2L9 3L16.2 10.2" fill="none" stroke="#000" stroke-width="3.3" stroke-linejoin="miter"/><path d="M9 4V19.2" stroke="#000" stroke-width="3.3"/><path d="M2.2 22.6H15.8" stroke="#7A7A7A" stroke-width="1.5"/></svg>
<svg style="left:374px;top:577.5px;" width="92" height="56" viewBox="0 0 92 56"><path d="M90.5 1H33C15 1 11.5 14 11.5 26V39H1.5L16.5 54L31.5 39H22V28C22 19 26 16 33 16H90.5Z" fill="#D9D9D9" stroke="#C2C2C2" stroke-width="1.2" stroke-linejoin="round"/></svg>
<svg style="left:685.5px;top:577.5px;" width="92" height="56" viewBox="0 0 92 56"><g transform="translate(92,0) scale(-1,1)"><path d="M90.5 1H33C15 1 11.5 14 11.5 26V39H1.5L16.5 54L31.5 39H22V28C22 19 26 16 33 16H90.5Z" fill="#D9D9D9" stroke="#C2C2C2" stroke-width="1.2" stroke-linejoin="round"/></g></svg>
<div style="left:479px;top:579.5px;width:191px;height:39px;background:#FDFDFD;border:1px solid #E6E6E6;border-radius:3px;"></div>
<svg style="left:492px;top:585px;" width="26" height="26" viewBox="0 0 26 26"><rect x="0.5" y="2.5" width="24.6" height="21.1" fill="#fff"/>
      <rect x="18" y="3.2" width="6.5" height="6" fill="#86C9EE"/><path d="M12.3 9.4H18.8V3.2Z" fill="#0F6CBD"/>
      <rect x="1.3" y="17" width="8" height="6" fill="#86C9EE"/><path d="M1.3 17H9.5V11.8Z" fill="#0F6CBD"/>
      <g fill="none" stroke="#5E5E5E" stroke-width="1.5"><path d="M14.5 2.6H25.1V23.6H0.6V15"/><path d="M9.1 12V23.6M17.3 9.5V23.6M8 16.6H25.1M13 9.5H25.1"/></g>
      <path d="M-0.5 1.5H14L-0.5 15Z" fill="#FDFDFD"/>
      <g fill="none" stroke="#3E3E3E" stroke-width="1.5"><path d="M4.4 12.6V4.8H12.4"/><path d="M10.6 1.7L13.5 4.8L10.6 7.8"/><path d="M1 10.5L4.4 13.7L7.8 10.5"/></g></svg>
<span class="t" style="left:522.00px;top:591.91px;font-size:17px;line-height:17px;color:#1A1A1A;transform:scaleX(0.9755);transform-origin:0 50%;">Перевернути вісь</span>
<div style="left:522.5px;top:606.6px;width:11.5px;height:1.1px;background:#8A8A8A;"></div>
<span class="t" style="left:116.30px;top:644.41px;font-size:17px;line-height:17px;color:#1A1A1A;transform:scaleX(0.9707);transform-origin:0 50%;">Записи легенди (ряди)</span>
<div style="left:116.5px;top:659.1px;width:9px;height:1.1px;background:#8A8A8A;"></div>
<span class="t" style="left:598.90px;top:644.21px;font-size:17px;line-height:17px;color:#1A1A1A;transform:scaleX(0.9987);transform-origin:0 50%;">Підписи горизонтальної осі (категорії)</span>
<div style="left:611px;top:659.1px;width:5px;height:1.1px;background:#8A8A8A;"></div>
<div style="left:115.7px;top:665.2px;width:467.8px;height:214.6px;background:#fff;border:1.3px solid #7C7C7C;"></div>
<div style="left:117px;top:666.5px;width:465.2px;height:40.5px;background:#F0F0F0;"></div>
<div style="left:117px;top:706.8px;width:465.2px;height:1.3px;background:#8C8C8C;"></div>
<div style="left:118.3px;top:667.3px;width:110.7px;height:38.2px;background:#FDFDFD;border:1px solid #E6E6E6;border-radius:3px;"></div>
<div style="left:231.6px;top:667.3px;width:140px;height:38.2px;background:#FDFDFD;border:1px solid #E6E6E6;border-radius:3px;"></div>
<div style="left:373.6px;top:667.3px;width:128px;height:38.2px;background:#FDFDFD;border:1px solid #E6E6E6;border-radius:3px;"></div>
<div style="left:503.4px;top:667.3px;width:38.2px;height:38.2px;background:#FDFDFD;border:1px solid #E6E6E6;border-radius:3px;"></div>
<div style="left:543.5px;top:667.3px;width:38.2px;height:38.2px;background:#FDFDFD;border:1px solid #E6E6E6;border-radius:3px;"></div>
<svg style="left:130px;top:673.5px;" width="26" height="26" viewBox="0 0 26 26"><g fill="none" stroke="#4A4A4A" stroke-width="1.4"><path d="M2 12.5V23.5H24V2H8"/><path d="M9.5 8V23.5M16.8 8V23.5M2 12.8H24M2 18.2H24"/></g><rect x="9" y="1.5" width="15.5" height="5.2" fill="#7A7A7A"/><path d="M6 0.5V11M0.8 5.7H11.2" stroke="#2E9A57" stroke-width="1.8"/></svg>
<span class="t" style="left:160.00px;top:679.61px;font-size:17px;line-height:17px;color:#1A1A1A;transform:scaleX(0.9707);transform-origin:0 50%;">Додати</span>
<div style="left:160.5px;top:694.4px;width:11px;height:1.1px;background:#8A8A8A;"></div>
<svg style="left:243.6px;top:673.5px;" width="26" height="26" viewBox="0 0 26 26"><g fill="none" stroke="#4A4A4A" stroke-width="1.4"><path d="M14 23.5H2V2H24V8"/><path d="M9.5 8V23.5M16.8 8V13M2 12.8H17M2 18.2H12"/></g><rect x="1.5" y="1.5" width="23" height="5.2" fill="#7A7A7A"/><path d="M21.5 9L25.2 12.7L14.5 23.3L10.2 24.6L11.3 20.3Z" fill="#D6E9FA" stroke="#2A7DD1" stroke-width="1.4" stroke-linejoin="round"/></svg>
<span class="t" style="left:274.00px;top:679.61px;font-size:17px;line-height:17px;color:#1A1A1A;transform:scaleX(0.9364);transform-origin:0 50%;">Редагувати</span>
<div style="left:274.5px;top:694.4px;width:10px;height:1.1px;background:#8A8A8A;"></div>
<svg style="left:389.5px;top:676.5px;" width="19" height="19" viewBox="0 0 19 19"><path d="M0.8 0.8L18.2 18.2M18.2 0.8L0.8 18.2" stroke="#E8484B" stroke-width="1.6"/></svg>
<span class="t" style="left:415.50px;top:679.61px;font-size:17px;line-height:17px;color:#1A1A1A;transform:scaleX(0.9349);transform-origin:0 50%;">Видалити</span>
<div style="left:416px;top:694.4px;width:10px;height:1.1px;background:#8A8A8A;"></div>
<svg style="left:514.5px;top:681.5px;" width="16" height="8" viewBox="0 0 16 8"><path d="M0.8 7.2L8 0.9L15.2 7.2" fill="none" stroke="#B4B4B4" stroke-width="1.4"/></svg>
<svg style="left:554.7px;top:684.3px;" width="16" height="8" viewBox="0 0 16 8"><path d="M0.8 0.8L8 7.1L15.2 0.8" fill="none" stroke="#1F80D8" stroke-width="1.5"/></svg>
<div style="left:555.8px;top:708px;width:26.4px;height:170.6px;background:#F0F0F0;"></div>
<div style="left:117px;top:714.2px;width:438.8px;height:32.4px;background:#E0E0E3;"></div>
<div style="left:561px;top:740.6px;width:16.8px;height:46px;background:#8A8A8A;"></div>
<div style="left:120.2px;top:720.2px;width:20px;height:20px;background:#0F5FBE;border-radius:4.5px;"></div>
<svg style="left:124.7px;top:726.2px;" width="11" height="9" viewBox="0 0 11 9"><path d="M0.8 4.5L4 7.6L10.2 1.2" fill="none" stroke="#fff" stroke-width="1.3"/></svg>
<span class="t" style="left:170.40px;top:724.01px;font-size:17px;line-height:17px;color:#1A1A1A;transform:scaleX(0.9655);transform-origin:0 50%;">Січень</span>
<div style="left:120.2px;top:753.32px;width:20px;height:20px;background:#0F5FBE;border-radius:4.5px;"></div>
<svg style="left:124.7px;top:759.32px;" width="11" height="9" viewBox="0 0 11 9"><path d="M0.8 4.5L4 7.6L10.2 1.2" fill="none" stroke="#fff" stroke-width="1.3"/></svg>
<span class="t" style="left:170.40px;top:757.13px;font-size:17px;line-height:17px;color:#1A1A1A;transform:scaleX(1.0176);transform-origin:0 50%;">Лютий</span>
<div style="left:120.2px;top:786.44px;width:20px;height:20px;background:#F5F5F5;border-radius:4.5px;border:1.2px solid #8E8E8E;"></div>
<span class="t" style="left:170.40px;top:790.25px;font-size:17px;line-height:17px;color:#1A1A1A;transform:scaleX(0.9523);transform-origin:0 50%;">Березень</span>
<div style="left:120.2px;top:819.5600000000001px;width:20px;height:20px;background:#F5F5F5;border-radius:4.5px;border:1.2px solid #8E8E8E;"></div>
<span class="t" style="left:170.40px;top:823.37px;font-size:17px;line-height:17px;color:#1A1A1A;transform:scaleX(0.9757);transform-origin:0 50%;">Квітень</span>
<div style="left:120.2px;top:852.6800000000001px;width:20px;height:20px;background:#F5F5F5;border-radius:4.5px;border:1.2px solid #8E8E8E;"></div>
<span class="t" style="left:170.40px;top:856.49px;font-size:17px;line-height:17px;color:#1A1A1A;transform:scaleX(0.9695);transform-origin:0 50%;">Травень</span>
<div style="left:598.4px;top:665.2px;width:435.8px;height:214.6px;background:#fff;border:1.3px solid #7C7C7C;"></div>
<div style="left:599.7px;top:706.8px;width:433.2px;height:1.3px;background:#8C8C8C;"></div>
<div style="left:600px;top:667.6px;width:140.4px;height:38px;background:#FDFDFD;border:1px solid #E6E6E6;border-radius:3px;"></div>
<svg style="left:613px;top:673.5px;" width="26" height="26" viewBox="0 0 26 26"><g fill="none" stroke="#4A4A4A" stroke-width="1.4"><path d="M14 23.5H2V2H24V8"/><path d="M9.5 8V23.5M16.8 8V13M2 12.8H17M2 18.2H12"/></g><rect x="1.5" y="1.5" width="23" height="5.2" fill="#7A7A7A"/><path d="M21.5 9L25.2 12.7L14.5 23.3L10.2 24.6L11.3 20.3Z" fill="#D6E9FA" stroke="#2A7DD1" stroke-width="1.4" stroke-linejoin="round"/></svg>
<span class="t" style="left:642.20px;top:679.71px;font-size:17px;line-height:17px;color:#1A1A1A;transform:scaleX(0.9420);transform-origin:0 50%;">Редагувати</span>
<div style="left:651.5px;top:694.4px;width:9.5px;height:1.1px;background:#8A8A8A;"></div>
<div style="left:602.6px;top:714.4px;width:20px;height:20px;background:#0F5FBE;border-radius:4.5px;"></div>
<svg style="left:607.1px;top:720.4px;" width="11" height="9" viewBox="0 0 11 9"><path d="M0.8 4.5L4 7.6L10.2 1.2" fill="none" stroke="#fff" stroke-width="1.3"/></svg>
<span class="t" style="left:652.90px;top:718.01px;font-size:17px;line-height:17px;color:#1A1A1A;transform:scaleX(0.9704);transform-origin:0 50%;">2016</span>
<div style="left:602.6px;top:747.52px;width:20px;height:20px;background:#0F5FBE;border-radius:4.5px;"></div>
<svg style="left:607.1px;top:753.52px;" width="11" height="9" viewBox="0 0 11 9"><path d="M0.8 4.5L4 7.6L10.2 1.2" fill="none" stroke="#fff" stroke-width="1.3"/></svg>
<span class="t" style="left:652.90px;top:751.13px;font-size:17px;line-height:17px;color:#1A1A1A;transform:scaleX(0.9704);transform-origin:0 50%;">2017</span>
<div style="left:602.6px;top:780.64px;width:20px;height:20px;background:#0F5FBE;border-radius:4.5px;"></div>
<svg style="left:607.1px;top:786.64px;" width="11" height="9" viewBox="0 0 11 9"><path d="M0.8 4.5L4 7.6L10.2 1.2" fill="none" stroke="#fff" stroke-width="1.3"/></svg>
<span class="t" style="left:652.90px;top:784.25px;font-size:17px;line-height:17px;color:#1A1A1A;transform:scaleX(0.9704);transform-origin:0 50%;">2018</span>
<div style="left:116.7px;top:901.2px;width:239.7px;height:39.8px;background:#FDFDFD;border:1px solid #E6E6E6;border-radius:3px;"></div>
<span class="t" style="left:130.40px;top:914.91px;font-size:17px;line-height:17px;color:#1A1A1A;transform:scaleX(0.9915);transform-origin:0 50%;">Приховані та пусті клітинки</span>
<div style="left:152px;top:929.6px;width:10px;height:1.1px;background:#8A8A8A;"></div>
<div style="left:804.4px;top:901.2px;width:106.8px;height:39.8px;background:#FDFDFD;border:1.5px solid #3F8FD8;border-radius:4.5px;"></div>
<span class="t" style="left:846.70px;top:914.71px;font-size:17px;line-height:17px;color:#1A1A1A;transform:scaleX(0.8590);transform-origin:0 50%;">OK</span>
<div style="left:927.8px;top:901.2px;width:105.6px;height:39.8px;background:#FDFDFD;border:1px solid #E6E6E6;border-radius:3px;"></div>
<span class="t" style="left:941.60px;top:914.71px;font-size:17px;line-height:17px;color:#1A1A1A;transform:scaleX(0.9321);transform-origin:0 50%;">Скасувати</span>
<div style="left:2530.5px;top:361.5px;width:26.5px;height:978px;background:#F0F0F0;"></div>
<div style="left:2531.7px;top:361.5px;width:25.3px;height:979.3px;background:#F6F6F6;border-radius:12.5px;"></div>
<svg style="left:2538px;top:369px;" width="15" height="11" viewBox="0 0 15 11"><path d="M7.3 1.2L13.6 9.8H1Z" fill="#737373" stroke="#737373" stroke-width="1.6" stroke-linejoin="round"/></svg>
<div style="left:2539px;top:388.2px;width:13px;height:896.5px;background:#737373;border-radius:6.5px;"></div>
<svg style="left:2538px;top:1322.5px;" width="15" height="11" viewBox="0 0 15 11"><path d="M7.3 9.8L13.6 1.2H1Z" fill="#737373" stroke="#737373" stroke-width="1.6" stroke-linejoin="round"/></svg>
<div style="left:3px;top:1339.3px;width:2527.5px;height:50px;background:#F0F0F0;"></div>
<svg style="left:158px;top:1339.2px;" width="144" height="46" viewBox="0 0 144 46"><path d="M0 0H144C139.5 0 135.5 3.5 135.5 8V36.5C135.5 41 132 44.5 127.5 44.5H16.5C12 44.5 8.5 41 8.5 36.5V8C8.5 3.5 4.5 0 0 0Z" fill="#fff"/><path d="M8.5 30V36.5C8.5 41 12 44.5 16.5 44.5H127.5C132 44.5 135.5 41 135.5 36.5V30" fill="none" stroke="#E2E2E2" stroke-width="1"/></svg>
<svg style="left:29px;top:1355.5px;" width="11" height="17" viewBox="0 0 11 17"><path d="M9.5 0.8L1.2 8.3L9.5 15.8" fill="none" stroke="#A6A6A6" stroke-width="1.5"/></svg>
<svg style="left:80px;top:1355.5px;" width="11" height="17" viewBox="0 0 11 17"><path d="M1.5 0.8L9.8 8.3L1.5 15.8" fill="none" stroke="#A6A6A6" stroke-width="1.5"/></svg>
<span class="t" style="left:179.10px;top:1350.51px;font-size:23.5px;line-height:23.5px;color:#2A2A2A;transform:scaleX(0.9359);transform-origin:0 50%;-webkit-text-stroke:0.55px #2A2A2A;">Додаток 1</span>
<div style="left:179px;top:1374.6px;width:101.6px;height:3.6px;background:#177D43;border-radius:1.5px;"></div>
<div style="left:299.4px;top:1350px;width:1.3px;height:28.5px;background:#C9C9C9;"></div>
<div style="left:443.0px;top:1350px;width:1.3px;height:28.5px;background:#C9C9C9;"></div>
<div style="left:587.0px;top:1350px;width:1.3px;height:28.5px;background:#C9C9C9;"></div>
<span class="t" style="left:321.10px;top:1355.61px;font-size:23.5px;line-height:23.5px;color:#3A3A3A;transform:scaleX(0.9285);transform-origin:0 50%;">Додаток 2</span>
<span class="t" style="left:464.80px;top:1355.61px;font-size:23.5px;line-height:23.5px;color:#3A3A3A;transform:scaleX(0.9257);transform-origin:0 50%;">Додаток 3</span>
<svg style="left:653.5px;top:1355px;" width="18" height="18" viewBox="0 0 18 18"><path d="M8.7 0.3V17.3M0.2 8.8H17.2" stroke="#444" stroke-width="1.5"/></svg>
<div style="left:1541.2px;top:1357.3px;width:3px;height:3px;background:#333;"></div>
<div style="left:1541.2px;top:1363.6px;width:3px;height:3px;background:#333;"></div>
<div style="left:1541.2px;top:1369.9px;width:3px;height:3px;background:#333;"></div>
<div style="left:1568.3px;top:1351px;width:963.4px;height:27px;background:#F6F6F6;border-radius:13.5px;"></div>
<svg style="left:1576px;top:1356.5px;" width="11" height="15" viewBox="0 0 11 15"><path d="M9.8 1.2V13.8L1.2 7.5Z" fill="#6B6B6B" stroke="#6B6B6B" stroke-width="1.6" stroke-linejoin="round"/></svg>
<div style="left:1594.4px;top:1357px;width:844.3px;height:13.6px;background:#6E6E6E;border-radius:6.8px;"></div>
<svg style="left:2513px;top:1356.5px;" width="11" height="15" viewBox="0 0 11 15"><path d="M1.2 1.2V13.8L9.8 7.5Z" fill="#6B6B6B" stroke="#6B6B6B" stroke-width="1.6" stroke-linejoin="round"/></svg>
<div style="left:3px;top:1389.2px;width:2554px;height:1.4px;background:#D3D3D3;"></div>
<div style="left:3px;top:1390.6px;width:2554px;height:45.7px;background:#F5F5F5;border-radius:0 0 11px 11px;"></div>
<span class="t" style="left:27.30px;top:1407.69px;font-size:17.5px;line-height:17.5px;color:#4A4A4A;transform:scaleX(0.9468);transform-origin:0 50%;">Укажіть</span>
<svg style="left:170px;top:1403.5px;" width="24" height="24" viewBox="0 0 24 24"><g fill="none" stroke="#2E2E2E" stroke-width="1.4" stroke-linecap="round" stroke-linejoin="round">
      <circle cx="10.5" cy="3.6" r="2.6"/>
      <path d="M1.2 6.2C4 8.8 7 9.3 7.3 10.5C7.6 13 5.5 18.5 4.8 21C4.4 22.6 6.6 23.2 7.3 21.8L10.4 15.5"/>
      <path d="M19.8 6.2C17 8.8 14 9.3 13.7 10.5C13.6 12 14 13.5 14.3 14.5"/>
      <path d="M1.2 6.2C1.4 4.6 3 4.6 4 5.4C6 6.8 8.5 7.3 10.5 7.3C12.5 7.3 15 6.8 17 5.4C18 4.6 19.6 4.6 19.8 6.2"/>
      <path d="M13 16L22.5 23M22.5 16L13 23"/></g></svg>
<span class="t" style="left:198.80px;top:1407.69px;font-size:17.5px;line-height:17.5px;color:#2E2E2E;transform:scaleX(0.9571);transform-origin:0 50%;font-weight:700;">Спеціальні можливості: щось не так</span>
<svg style="left:2090.5px;top:1404px;" width="21" height="21" viewBox="0 0 21 21"><g fill="none" stroke="#BDBDBD" stroke-width="1.3"><rect x="0.7" y="0.7" width="19.4" height="19.4"/><path d="M7.2 0.7V20.1M13.6 0.7V20.1M0.7 7.2H20.1M0.7 13.6H20.1"/></g></svg>
<svg style="left:2156px;top:1404px;" width="22" height="21" viewBox="0 0 22 21"><g fill="none" stroke="#BDBDBD" stroke-width="1.3"><rect x="0.7" y="0.7" width="20.6" height="19.4"/><rect x="5" y="4.5" width="12" height="11.5"/><path d="M7.5 7.7H14.5M7.5 10.3H14.5M7.5 12.9H14.5"/></g></svg>
<svg style="left:2221px;top:1404px;" width="22" height="21" viewBox="0 0 22 21"><g fill="none" stroke="#BDBDBD" stroke-width="1.3"><rect x="0.7" y="0.7" width="20.4" height="19.4"/><path d="M0.7 10.5H21.1M7.3 0.7V10.5M13.8 0.7V10.5"/></g></svg>
<div style="left:2273.5px;top:1414.3px;width:11.2px;height:1.3px;background:#C4C4C4;"></div>
<div style="left:2293.8px;top:1414.3px;width:154.4px;height:1.4px;background:#5A5A5A;"></div>
<div style="left:2370.9px;top:1409.7px;width:1.5px;height:10.6px;background:#5A5A5A;"></div>
<svg style="left:2457px;top:1409.5px;" width="12" height="12" viewBox="0 0 12 12"><path d="M5.8 0.3V11.3M0.3 5.8H11.3" stroke="#C4C4C4" stroke-width="1.3"/></svg>
<span class="t" style="left:2498.80px;top:1407.79px;font-size:17.5px;line-height:17.5px;color:#BBBBBB;transform:scaleX(0.8870);transform-origin:0 50%;">100%</span>
</body></html>
